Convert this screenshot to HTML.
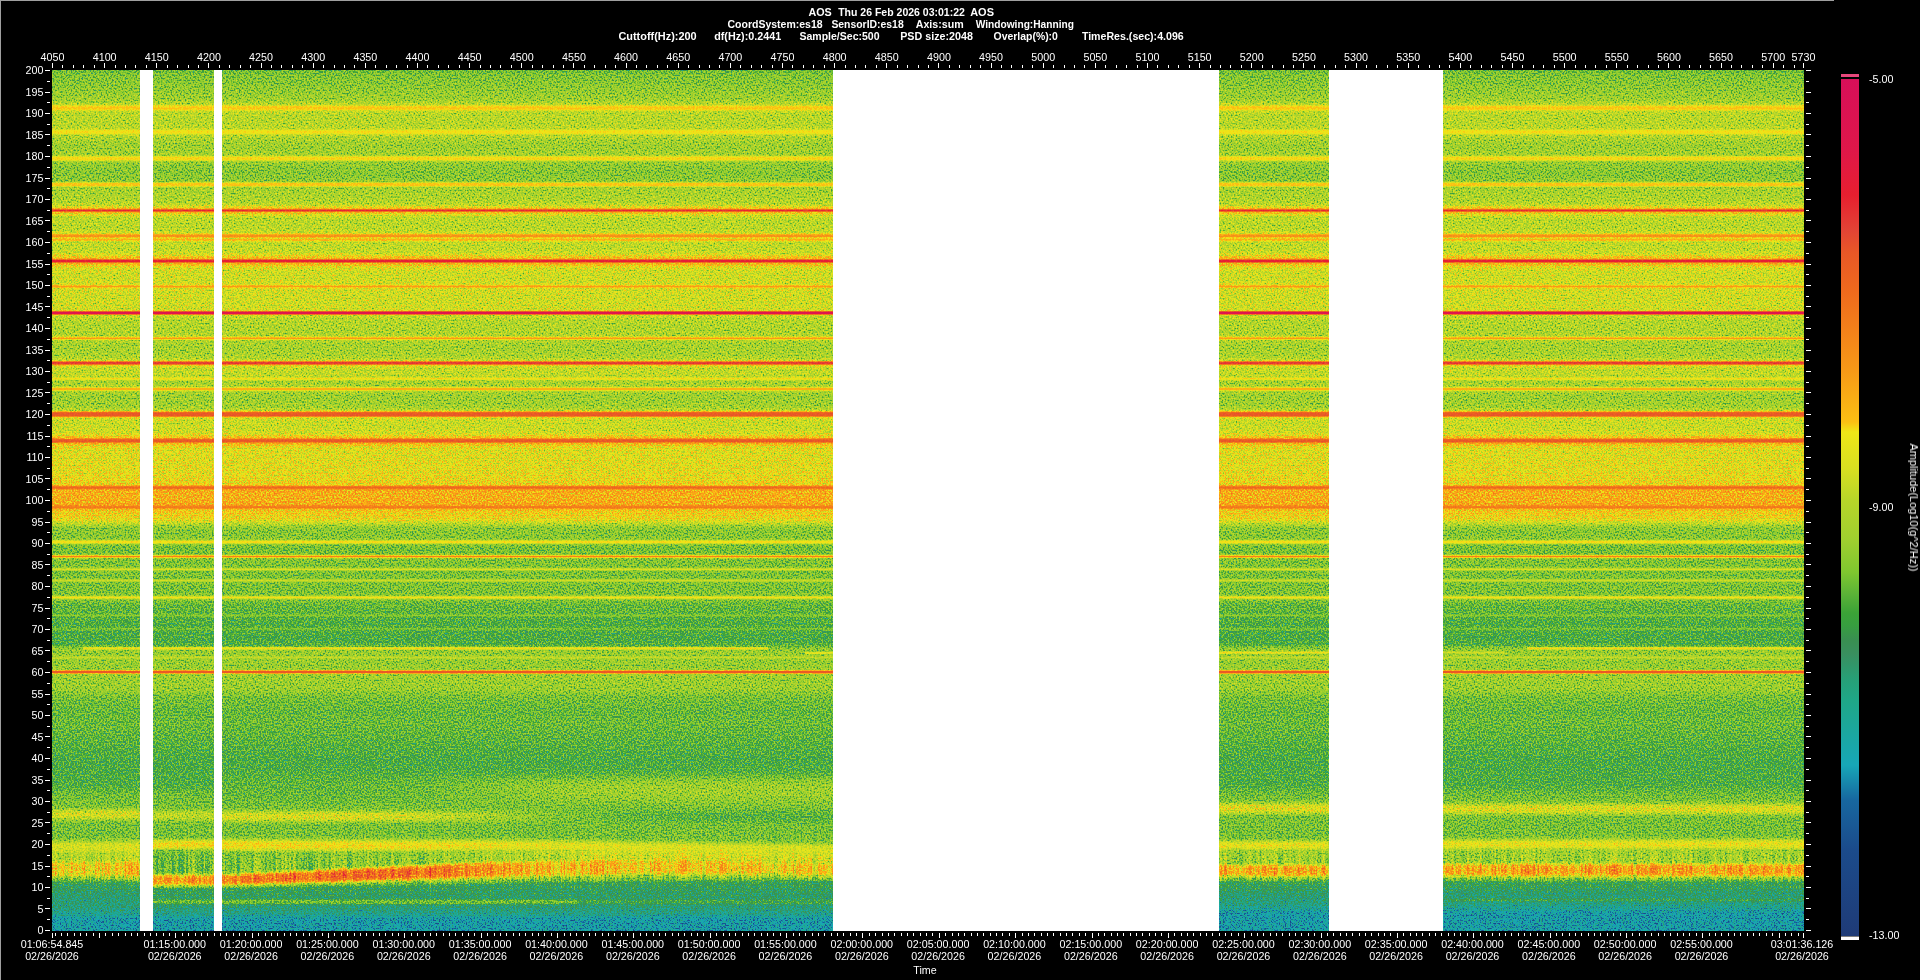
<!DOCTYPE html>
<html lang="en"><head><meta charset="utf-8"><title>AOS spectrogram</title>
<style>
html,body{margin:0;padding:0;background:#000;overflow:hidden}
svg{display:block}
.t{font:11px "Liberation Sans",sans-serif;fill:#fff}
.h{font:bold 11px "Liberation Sans",sans-serif;fill:#fff}
text{white-space:pre}
</style></head><body>
<svg width="1920" height="980" viewBox="0 0 1920 980">
<defs>
<linearGradient id="gb" x1="0" y1="0" x2="0" y2="1"><stop offset="0.0000" stop-color="#41ff00"/><stop offset="0.0058" stop-color="#46ff00"/><stop offset="0.0174" stop-color="#49ff00"/><stop offset="0.0348" stop-color="#50ff00"/><stop offset="0.0372" stop-color="#54ff00"/><stop offset="0.0407" stop-color="#5cff00"/><stop offset="0.0418" stop-color="#8c3e00"/><stop offset="0.0430" stop-color="#932600"/><stop offset="0.0453" stop-color="#932600"/><stop offset="0.0465" stop-color="#8c3e00"/><stop offset="0.0476" stop-color="#5cff00"/><stop offset="0.0499" stop-color="#59ff00"/><stop offset="0.0650" stop-color="#58ff00"/><stop offset="0.0685" stop-color="#5bff00"/><stop offset="0.0697" stop-color="#7d6e00"/><stop offset="0.0708" stop-color="#902600"/><stop offset="0.0732" stop-color="#902600"/><stop offset="0.0743" stop-color="#7d6e00"/><stop offset="0.0755" stop-color="#59ff00"/><stop offset="0.0790" stop-color="#55ff00"/><stop offset="0.0871" stop-color="#4fff00"/><stop offset="0.0987" stop-color="#51ff00"/><stop offset="0.0999" stop-color="#65b700"/><stop offset="0.1010" stop-color="#912600"/><stop offset="0.1045" stop-color="#912600"/><stop offset="0.1057" stop-color="#63b700"/><stop offset="0.1069" stop-color="#4eff00"/><stop offset="0.1103" stop-color="#4bff00"/><stop offset="0.1185" stop-color="#48ff00"/><stop offset="0.1278" stop-color="#4aff00"/><stop offset="0.1301" stop-color="#4eff00"/><stop offset="0.1312" stop-color="#932600"/><stop offset="0.1347" stop-color="#932600"/><stop offset="0.1359" stop-color="#53ff00"/><stop offset="0.1382" stop-color="#52ff00"/><stop offset="0.1533" stop-color="#56ff00"/><stop offset="0.1556" stop-color="#5aff00"/><stop offset="0.1568" stop-color="#5dff00"/><stop offset="0.1603" stop-color="#6fff00"/><stop offset="0.1614" stop-color="#8bb000"/><stop offset="0.1626" stop-color="#cd4c00"/><stop offset="0.1638" stop-color="#cd4c00"/><stop offset="0.1649" stop-color="#8bb000"/><stop offset="0.1661" stop-color="#70ff00"/><stop offset="0.1696" stop-color="#5fff00"/><stop offset="0.1719" stop-color="#5aff00"/><stop offset="0.1754" stop-color="#59ff00"/><stop offset="0.1835" stop-color="#59ff00"/><stop offset="0.1870" stop-color="#5cff00"/><stop offset="0.1893" stop-color="#61ff00"/><stop offset="0.1905" stop-color="#79b000"/><stop offset="0.1916" stop-color="#a04c00"/><stop offset="0.1940" stop-color="#a04c00"/><stop offset="0.1951" stop-color="#63ff00"/><stop offset="0.1963" stop-color="#858800"/><stop offset="0.1974" stop-color="#974c00"/><stop offset="0.1986" stop-color="#77b000"/><stop offset="0.1998" stop-color="#5cff00"/><stop offset="0.2033" stop-color="#5bff00"/><stop offset="0.2091" stop-color="#5cff00"/><stop offset="0.2114" stop-color="#5eff00"/><stop offset="0.2137" stop-color="#62ff00"/><stop offset="0.2160" stop-color="#6bff00"/><stop offset="0.2184" stop-color="#77ff00"/><stop offset="0.2195" stop-color="#7cd700"/><stop offset="0.2207" stop-color="#d24c00"/><stop offset="0.2230" stop-color="#d24c00"/><stop offset="0.2242" stop-color="#7cd700"/><stop offset="0.2253" stop-color="#78ff00"/><stop offset="0.2276" stop-color="#6cff00"/><stop offset="0.2300" stop-color="#64ff00"/><stop offset="0.2323" stop-color="#61ff00"/><stop offset="0.2358" stop-color="#60ff00"/><stop offset="0.2451" stop-color="#60ff00"/><stop offset="0.2485" stop-color="#62ff00"/><stop offset="0.2497" stop-color="#6ed200"/><stop offset="0.2509" stop-color="#a03300"/><stop offset="0.2520" stop-color="#a03300"/><stop offset="0.2532" stop-color="#6ed200"/><stop offset="0.2544" stop-color="#62ff00"/><stop offset="0.2590" stop-color="#60ff00"/><stop offset="0.2776" stop-color="#60ff00"/><stop offset="0.2787" stop-color="#61ff00"/><stop offset="0.2799" stop-color="#7ecc00"/><stop offset="0.2811" stop-color="#ee1a00"/><stop offset="0.2822" stop-color="#ee1a00"/><stop offset="0.2834" stop-color="#de3300"/><stop offset="0.2846" stop-color="#60ff00"/><stop offset="0.2869" stop-color="#5bff00"/><stop offset="0.2904" stop-color="#57ff00"/><stop offset="0.3055" stop-color="#55ff00"/><stop offset="0.3089" stop-color="#57ff00"/><stop offset="0.3101" stop-color="#779f00"/><stop offset="0.3113" stop-color="#a22600"/><stop offset="0.3124" stop-color="#a22600"/><stop offset="0.3136" stop-color="#57ff00"/><stop offset="0.3159" stop-color="#54ff00"/><stop offset="0.3194" stop-color="#52ff00"/><stop offset="0.3310" stop-color="#53ff00"/><stop offset="0.3345" stop-color="#56ff00"/><stop offset="0.3357" stop-color="#5aff00"/><stop offset="0.3380" stop-color="#66ff00"/><stop offset="0.3391" stop-color="#c84c00"/><stop offset="0.3415" stop-color="#c84c00"/><stop offset="0.3426" stop-color="#7dc400"/><stop offset="0.3438" stop-color="#66ff00"/><stop offset="0.3461" stop-color="#5dff00"/><stop offset="0.3473" stop-color="#5cff00"/><stop offset="0.3542" stop-color="#5bff00"/><stop offset="0.3566" stop-color="#58ff00"/><stop offset="0.3577" stop-color="#8e3300"/><stop offset="0.3589" stop-color="#8e3300"/><stop offset="0.3600" stop-color="#748e00"/><stop offset="0.3612" stop-color="#52ff00"/><stop offset="0.3647" stop-color="#53ff00"/><stop offset="0.3682" stop-color="#57ff00"/><stop offset="0.3693" stop-color="#992600"/><stop offset="0.3717" stop-color="#992600"/><stop offset="0.3728" stop-color="#61cf00"/><stop offset="0.3740" stop-color="#53ff00"/><stop offset="0.3775" stop-color="#4fff00"/><stop offset="0.3879" stop-color="#50ff00"/><stop offset="0.3914" stop-color="#51ff00"/><stop offset="0.3937" stop-color="#56ff00"/><stop offset="0.3961" stop-color="#5eff00"/><stop offset="0.3972" stop-color="#a86a00"/><stop offset="0.3984" stop-color="#c04000"/><stop offset="0.4019" stop-color="#c04000"/><stop offset="0.4030" stop-color="#7cbf00"/><stop offset="0.4042" stop-color="#63ff00"/><stop offset="0.4065" stop-color="#5fff00"/><stop offset="0.4100" stop-color="#5eff00"/><stop offset="0.4181" stop-color="#5fff00"/><stop offset="0.4216" stop-color="#62ff00"/><stop offset="0.4239" stop-color="#68ff00"/><stop offset="0.4274" stop-color="#76ff00"/><stop offset="0.4286" stop-color="#a97400"/><stop offset="0.4297" stop-color="#be4c00"/><stop offset="0.4321" stop-color="#be4c00"/><stop offset="0.4332" stop-color="#79ff00"/><stop offset="0.4379" stop-color="#69ff00"/><stop offset="0.4413" stop-color="#65ff00"/><stop offset="0.4646" stop-color="#67ff00"/><stop offset="0.4785" stop-color="#6bff00"/><stop offset="0.4820" stop-color="#6dff00"/><stop offset="0.4832" stop-color="#979500"/><stop offset="0.4843" stop-color="#b84000"/><stop offset="0.4855" stop-color="#b84000"/><stop offset="0.4866" stop-color="#9c9500"/><stop offset="0.4878" stop-color="#7bff00"/><stop offset="0.4901" stop-color="#7aff00"/><stop offset="0.5006" stop-color="#7aff00"/><stop offset="0.5052" stop-color="#7dff00"/><stop offset="0.5064" stop-color="#a26a00"/><stop offset="0.5075" stop-color="#ae4000"/><stop offset="0.5087" stop-color="#ae4000"/><stop offset="0.5099" stop-color="#76ff00"/><stop offset="0.5110" stop-color="#72ff00"/><stop offset="0.5122" stop-color="#70ff00"/><stop offset="0.5215" stop-color="#6bff00"/><stop offset="0.5261" stop-color="#5dff00"/><stop offset="0.5308" stop-color="#4dff00"/><stop offset="0.5343" stop-color="#49ff00"/><stop offset="0.5412" stop-color="#48ff00"/><stop offset="0.5447" stop-color="#4aff00"/><stop offset="0.5459" stop-color="#58cf00"/><stop offset="0.5470" stop-color="#902600"/><stop offset="0.5494" stop-color="#902600"/><stop offset="0.5505" stop-color="#56cf00"/><stop offset="0.5517" stop-color="#47ff00"/><stop offset="0.5540" stop-color="#44ff00"/><stop offset="0.5610" stop-color="#44ff00"/><stop offset="0.5621" stop-color="#46ff00"/><stop offset="0.5633" stop-color="#5bcf00"/><stop offset="0.5645" stop-color="#ad2600"/><stop offset="0.5656" stop-color="#ad2600"/><stop offset="0.5668" stop-color="#5ccf00"/><stop offset="0.5679" stop-color="#47ff00"/><stop offset="0.5772" stop-color="#45ff00"/><stop offset="0.5784" stop-color="#5fb000"/><stop offset="0.5796" stop-color="#7f4c00"/><stop offset="0.5807" stop-color="#7f4c00"/><stop offset="0.5819" stop-color="#45ff00"/><stop offset="0.5900" stop-color="#45ff00"/><stop offset="0.5912" stop-color="#51d700"/><stop offset="0.5923" stop-color="#7b4c00"/><stop offset="0.5935" stop-color="#7b4c00"/><stop offset="0.5947" stop-color="#51d700"/><stop offset="0.5958" stop-color="#45ff00"/><stop offset="0.6063" stop-color="#45ff00"/><stop offset="0.6098" stop-color="#47ff00"/><stop offset="0.6109" stop-color="#5eb700"/><stop offset="0.6121" stop-color="#902600"/><stop offset="0.6132" stop-color="#902600"/><stop offset="0.6144" stop-color="#5eb700"/><stop offset="0.6156" stop-color="#47ff00"/><stop offset="0.6202" stop-color="#40ff00"/><stop offset="0.6318" stop-color="#3dff00"/><stop offset="0.6330" stop-color="#5d8000"/><stop offset="0.6341" stop-color="#5d8000"/><stop offset="0.6353" stop-color="#3bff00"/><stop offset="0.6469" stop-color="#39ff00"/><stop offset="0.6481" stop-color="#4faa00"/><stop offset="0.6492" stop-color="#5a8000"/><stop offset="0.6504" stop-color="#48c600"/><stop offset="0.6516" stop-color="#39ff00"/><stop offset="0.6620" stop-color="#38ff00"/><stop offset="0.6678" stop-color="#3bff00"/><stop offset="0.6713" stop-color="#49ff00"/><stop offset="0.6748" stop-color="#4dff00"/><stop offset="0.6794" stop-color="#4dff00"/><stop offset="0.6806" stop-color="#51ee00"/><stop offset="0.6818" stop-color="#756600"/><stop offset="0.6829" stop-color="#756600"/><stop offset="0.6841" stop-color="#51ee00"/><stop offset="0.6852" stop-color="#4dff00"/><stop offset="0.6945" stop-color="#4dff00"/><stop offset="0.6969" stop-color="#50ff00"/><stop offset="0.6980" stop-color="#c51f00"/><stop offset="0.7003" stop-color="#c51f00"/><stop offset="0.7015" stop-color="#51ff00"/><stop offset="0.7050" stop-color="#4fff00"/><stop offset="0.7201" stop-color="#4eff00"/><stop offset="0.7282" stop-color="#44ff00"/><stop offset="0.7456" stop-color="#3fff00"/><stop offset="0.7573" stop-color="#41ff00"/><stop offset="0.8014" stop-color="#38ff00"/><stop offset="0.8304" stop-color="#38ff06"/><stop offset="0.8420" stop-color="#3fff12"/><stop offset="0.8571" stop-color="#41ff20"/><stop offset="1.0000" stop-color="#3eff4c"/></linearGradient>
<linearGradient id="l1" x1="0" y1="0" x2="0" y2="1"><stop offset="0.0000" stop-color="#3aff00"/><stop offset="0.0447" stop-color="#38ff00"/><stop offset="0.1844" stop-color="#38ff06"/><stop offset="0.2402" stop-color="#3eff17"/><stop offset="0.3017" stop-color="#3eff27"/><stop offset="0.3128" stop-color="#42ff2a"/><stop offset="0.3296" stop-color="#53ff2e"/><stop offset="0.3352" stop-color="#57ff2f"/><stop offset="0.3464" stop-color="#59ff32"/><stop offset="0.3575" stop-color="#58ff34"/><stop offset="0.3631" stop-color="#56ff36"/><stop offset="0.3687" stop-color="#51ff37"/><stop offset="0.3855" stop-color="#3fff3b"/><stop offset="0.3966" stop-color="#39ff3d"/><stop offset="0.4693" stop-color="#36fe50"/><stop offset="0.4804" stop-color="#39f753"/><stop offset="0.4860" stop-color="#3dee51"/><stop offset="0.4916" stop-color="#44e14d"/><stop offset="0.5084" stop-color="#5eb137"/><stop offset="0.5140" stop-color="#65a532"/><stop offset="0.5196" stop-color="#699e2e"/><stop offset="0.5251" stop-color="#6b9a2d"/><stop offset="0.5363" stop-color="#6b992f"/><stop offset="0.5475" stop-color="#689e35"/><stop offset="0.5531" stop-color="#63a53c"/><stop offset="0.5642" stop-color="#53c054"/><stop offset="0.5866" stop-color="#3ff793"/><stop offset="0.6034" stop-color="#38ffb7"/><stop offset="0.6145" stop-color="#42ffca"/><stop offset="0.6257" stop-color="#47ffde"/><stop offset="0.6480" stop-color="#44ffff"/><stop offset="0.6648" stop-color="#43ffff"/><stop offset="0.6760" stop-color="#41ffff"/><stop offset="0.6872" stop-color="#39ffff"/><stop offset="0.7039" stop-color="#23ffff"/><stop offset="0.7095" stop-color="#1dffff"/><stop offset="0.7151" stop-color="#19ffff"/><stop offset="0.7207" stop-color="#32ff4c"/><stop offset="0.7263" stop-color="#28ff4c"/><stop offset="0.7318" stop-color="#23ff4c"/><stop offset="0.7654" stop-color="#20ff4c"/><stop offset="0.7877" stop-color="#1aff4c"/><stop offset="0.8715" stop-color="#15ff4c"/><stop offset="0.9050" stop-color="#0dff4c"/><stop offset="0.9330" stop-color="#00ff4c"/><stop offset="1.0000" stop-color="#00ff4c"/></linearGradient>
<linearGradient id="l2" x1="0" y1="0" x2="0" y2="1"><stop offset="0.0000" stop-color="#3aff00"/><stop offset="0.0447" stop-color="#38ff00"/><stop offset="0.1844" stop-color="#38ff06"/><stop offset="0.2402" stop-color="#3eff17"/><stop offset="0.3073" stop-color="#3dff28"/><stop offset="0.3184" stop-color="#40ff2b"/><stop offset="0.3408" stop-color="#50ff30"/><stop offset="0.3520" stop-color="#51ff33"/><stop offset="0.3687" stop-color="#4fff37"/><stop offset="0.3911" stop-color="#3dff3c"/><stop offset="0.4022" stop-color="#39ff3f"/><stop offset="0.4693" stop-color="#36fe51"/><stop offset="0.4749" stop-color="#37fc52"/><stop offset="0.4804" stop-color="#3cf451"/><stop offset="0.4860" stop-color="#45e44c"/><stop offset="0.4972" stop-color="#63b737"/><stop offset="0.5028" stop-color="#6ea52f"/><stop offset="0.5084" stop-color="#749c2b"/><stop offset="0.5196" stop-color="#76992b"/><stop offset="0.5251" stop-color="#749c2e"/><stop offset="0.5307" stop-color="#6da536"/><stop offset="0.5363" stop-color="#61b743"/><stop offset="0.5475" stop-color="#40e468"/><stop offset="0.5531" stop-color="#35f476"/><stop offset="0.5587" stop-color="#2ffc7f"/><stop offset="0.5642" stop-color="#2cfe84"/><stop offset="0.5810" stop-color="#2aff91"/><stop offset="0.6425" stop-color="#17fffa"/><stop offset="0.6648" stop-color="#16ffff"/><stop offset="0.6704" stop-color="#17ffff"/><stop offset="0.6760" stop-color="#1bffff"/><stop offset="0.6816" stop-color="#26ffff"/><stop offset="0.6927" stop-color="#47ffff"/><stop offset="0.6983" stop-color="#51ffff"/><stop offset="0.7039" stop-color="#56ffff"/><stop offset="0.7207" stop-color="#57ffff"/><stop offset="0.7263" stop-color="#56ffff"/><stop offset="0.7318" stop-color="#51ffff"/><stop offset="0.7374" stop-color="#47ffff"/><stop offset="0.7486" stop-color="#26ffff"/><stop offset="0.7542" stop-color="#3bff4c"/><stop offset="0.7598" stop-color="#2dff4c"/><stop offset="0.7654" stop-color="#23ff4c"/><stop offset="0.8156" stop-color="#1fff4c"/><stop offset="0.8212" stop-color="#1fff4c"/><stop offset="0.8268" stop-color="#30ff4c"/><stop offset="0.8324" stop-color="#32ff4c"/><stop offset="0.8436" stop-color="#32ff4c"/><stop offset="0.8492" stop-color="#28ff4c"/><stop offset="0.8547" stop-color="#19ff4c"/><stop offset="0.8715" stop-color="#17ff4c"/><stop offset="0.9050" stop-color="#10ff4c"/><stop offset="0.9330" stop-color="#00ff4c"/><stop offset="1.0000" stop-color="#00ff4c"/></linearGradient>
<linearGradient id="s0" x1="0" y1="0" x2="0" y2="1"><stop offset="0.0000" stop-color="#3aff00"/><stop offset="0.0447" stop-color="#38ff00"/><stop offset="0.0950" stop-color="#39ff00"/><stop offset="0.1564" stop-color="#3dff00"/><stop offset="0.1899" stop-color="#3dff07"/><stop offset="0.2458" stop-color="#3bff18"/><stop offset="0.3128" stop-color="#3dff2a"/><stop offset="0.3240" stop-color="#41ff2c"/><stop offset="0.3408" stop-color="#52ff30"/><stop offset="0.3464" stop-color="#56ff32"/><stop offset="0.3575" stop-color="#58ff34"/><stop offset="0.3687" stop-color="#57ff37"/><stop offset="0.3743" stop-color="#55ff38"/><stop offset="0.3799" stop-color="#50ff39"/><stop offset="0.3966" stop-color="#3eff3d"/><stop offset="0.4078" stop-color="#39ff40"/><stop offset="0.4637" stop-color="#36fe4e"/><stop offset="0.4693" stop-color="#37fc4f"/><stop offset="0.4749" stop-color="#3bf650"/><stop offset="0.4804" stop-color="#41eb4d"/><stop offset="0.4860" stop-color="#4cda47"/><stop offset="0.4972" stop-color="#65b436"/><stop offset="0.5028" stop-color="#6ea52f"/><stop offset="0.5084" stop-color="#739d2b"/><stop offset="0.5196" stop-color="#76992b"/><stop offset="0.5307" stop-color="#739d30"/><stop offset="0.5363" stop-color="#6da537"/><stop offset="0.5419" stop-color="#63b342"/><stop offset="0.5587" stop-color="#3bea71"/><stop offset="0.5642" stop-color="#33f57d"/><stop offset="0.5698" stop-color="#2ffb85"/><stop offset="0.6425" stop-color="#19fffa"/><stop offset="0.6704" stop-color="#19ffff"/><stop offset="0.6760" stop-color="#1fffff"/><stop offset="0.6816" stop-color="#2effff"/><stop offset="0.6872" stop-color="#41ffff"/><stop offset="0.6927" stop-color="#51ffff"/><stop offset="0.6983" stop-color="#5affff"/><stop offset="0.7039" stop-color="#5effff"/><stop offset="0.7207" stop-color="#5effff"/><stop offset="0.7263" stop-color="#5cffff"/><stop offset="0.7318" stop-color="#56ffff"/><stop offset="0.7374" stop-color="#49ffff"/><stop offset="0.7486" stop-color="#24ffff"/><stop offset="0.7542" stop-color="#38ff4c"/><stop offset="0.7598" stop-color="#2cff4c"/><stop offset="0.7654" stop-color="#23ff4c"/><stop offset="0.8156" stop-color="#1eff4c"/><stop offset="0.8212" stop-color="#20ff4c"/><stop offset="0.8268" stop-color="#33ff4c"/><stop offset="0.8324" stop-color="#35ff4c"/><stop offset="0.8436" stop-color="#35ff4c"/><stop offset="0.8492" stop-color="#2aff4c"/><stop offset="0.8547" stop-color="#19ff4c"/><stop offset="0.8715" stop-color="#17ff4c"/><stop offset="0.9050" stop-color="#10ff4c"/><stop offset="0.9330" stop-color="#00ff4c"/><stop offset="1.0000" stop-color="#00ff4c"/></linearGradient>
<linearGradient id="s1" x1="0" y1="0" x2="0" y2="1"><stop offset="0.0000" stop-color="#3aff00"/><stop offset="0.0447" stop-color="#38ff00"/><stop offset="0.0950" stop-color="#39ff00"/><stop offset="0.1564" stop-color="#3dff00"/><stop offset="0.1899" stop-color="#3dff07"/><stop offset="0.2458" stop-color="#3bff18"/><stop offset="0.3128" stop-color="#3dff2a"/><stop offset="0.3240" stop-color="#41ff2c"/><stop offset="0.3408" stop-color="#53ff30"/><stop offset="0.3464" stop-color="#57ff32"/><stop offset="0.3575" stop-color="#59ff34"/><stop offset="0.3687" stop-color="#58ff37"/><stop offset="0.3743" stop-color="#55ff38"/><stop offset="0.3799" stop-color="#51ff39"/><stop offset="0.3966" stop-color="#3fff3d"/><stop offset="0.4078" stop-color="#39ff40"/><stop offset="0.4637" stop-color="#36fe4e"/><stop offset="0.4693" stop-color="#37fc50"/><stop offset="0.4749" stop-color="#3af750"/><stop offset="0.4804" stop-color="#40ec4d"/><stop offset="0.4860" stop-color="#4adc48"/><stop offset="0.4972" stop-color="#63b637"/><stop offset="0.5028" stop-color="#6da730"/><stop offset="0.5084" stop-color="#739e2c"/><stop offset="0.5140" stop-color="#759a2b"/><stop offset="0.5196" stop-color="#75992b"/><stop offset="0.5307" stop-color="#739c30"/><stop offset="0.5363" stop-color="#6ea336"/><stop offset="0.5419" stop-color="#64b141"/><stop offset="0.5587" stop-color="#3ce870"/><stop offset="0.5642" stop-color="#33f47c"/><stop offset="0.5698" stop-color="#30fb84"/><stop offset="0.6425" stop-color="#1afffa"/><stop offset="0.6648" stop-color="#19ffff"/><stop offset="0.6704" stop-color="#21ffff"/><stop offset="0.6760" stop-color="#31ffff"/><stop offset="0.6816" stop-color="#45ffff"/><stop offset="0.6872" stop-color="#55ffff"/><stop offset="0.6927" stop-color="#5effff"/><stop offset="0.6983" stop-color="#61ffff"/><stop offset="0.7151" stop-color="#62ffff"/><stop offset="0.7207" stop-color="#60ffff"/><stop offset="0.7263" stop-color="#5bffff"/><stop offset="0.7318" stop-color="#50ffff"/><stop offset="0.7430" stop-color="#2bffff"/><stop offset="0.7486" stop-color="#1dffff"/><stop offset="0.7542" stop-color="#32ff4c"/><stop offset="0.7598" stop-color="#27ff4c"/><stop offset="0.7654" stop-color="#23ff4c"/><stop offset="0.8156" stop-color="#1eff4c"/><stop offset="0.8212" stop-color="#1fff4c"/><stop offset="0.8268" stop-color="#33ff4c"/><stop offset="0.8324" stop-color="#35ff4c"/><stop offset="0.8436" stop-color="#35ff4c"/><stop offset="0.8492" stop-color="#29ff4c"/><stop offset="0.8547" stop-color="#19ff4c"/><stop offset="0.8715" stop-color="#17ff4c"/><stop offset="0.9050" stop-color="#10ff4c"/><stop offset="0.9330" stop-color="#00ff4c"/><stop offset="1.0000" stop-color="#00ff4c"/></linearGradient>
<linearGradient id="s2" x1="0" y1="0" x2="0" y2="1"><stop offset="0.0000" stop-color="#3aff00"/><stop offset="0.0447" stop-color="#38ff00"/><stop offset="0.0950" stop-color="#39ff00"/><stop offset="0.1564" stop-color="#3dff00"/><stop offset="0.1899" stop-color="#3dff07"/><stop offset="0.2458" stop-color="#3bff18"/><stop offset="0.3128" stop-color="#3dff2a"/><stop offset="0.3240" stop-color="#42ff2c"/><stop offset="0.3408" stop-color="#53ff30"/><stop offset="0.3464" stop-color="#57ff32"/><stop offset="0.3575" stop-color="#5aff34"/><stop offset="0.3687" stop-color="#59ff37"/><stop offset="0.3743" stop-color="#56ff38"/><stop offset="0.3799" stop-color="#52ff39"/><stop offset="0.3966" stop-color="#3fff3d"/><stop offset="0.4078" stop-color="#39ff40"/><stop offset="0.4637" stop-color="#36fe4e"/><stop offset="0.4749" stop-color="#39f750"/><stop offset="0.4804" stop-color="#3fee4e"/><stop offset="0.4860" stop-color="#49de49"/><stop offset="0.4972" stop-color="#62b838"/><stop offset="0.5028" stop-color="#6ca831"/><stop offset="0.5084" stop-color="#729e2c"/><stop offset="0.5140" stop-color="#759a2b"/><stop offset="0.5196" stop-color="#75992b"/><stop offset="0.5307" stop-color="#739b2f"/><stop offset="0.5363" stop-color="#6ea235"/><stop offset="0.5419" stop-color="#65af40"/><stop offset="0.5587" stop-color="#3ee66f"/><stop offset="0.5642" stop-color="#34f37b"/><stop offset="0.5698" stop-color="#31fa84"/><stop offset="0.6425" stop-color="#1bfffa"/><stop offset="0.6592" stop-color="#1affff"/><stop offset="0.6648" stop-color="#24ffff"/><stop offset="0.6704" stop-color="#35ffff"/><stop offset="0.6760" stop-color="#48ffff"/><stop offset="0.6816" stop-color="#58ffff"/><stop offset="0.6872" stop-color="#61ffff"/><stop offset="0.6927" stop-color="#64ffff"/><stop offset="0.7095" stop-color="#65ffff"/><stop offset="0.7151" stop-color="#64ffff"/><stop offset="0.7207" stop-color="#60ffff"/><stop offset="0.7263" stop-color="#56ffff"/><stop offset="0.7318" stop-color="#46ffff"/><stop offset="0.7374" stop-color="#32ffff"/><stop offset="0.7430" stop-color="#22ffff"/><stop offset="0.7486" stop-color="#39ff4c"/><stop offset="0.7542" stop-color="#2dff4c"/><stop offset="0.7598" stop-color="#23ff4c"/><stop offset="0.8156" stop-color="#1eff4c"/><stop offset="0.8212" stop-color="#1fff4c"/><stop offset="0.8268" stop-color="#33ff4c"/><stop offset="0.8324" stop-color="#35ff4c"/><stop offset="0.8436" stop-color="#35ff4c"/><stop offset="0.8492" stop-color="#29ff4c"/><stop offset="0.8547" stop-color="#19ff4c"/><stop offset="0.8715" stop-color="#17ff4c"/><stop offset="0.9050" stop-color="#10ff4c"/><stop offset="0.9330" stop-color="#00ff4c"/><stop offset="1.0000" stop-color="#00ff4c"/></linearGradient>
<linearGradient id="s3" x1="0" y1="0" x2="0" y2="1"><stop offset="0.0000" stop-color="#3aff00"/><stop offset="0.0447" stop-color="#38ff00"/><stop offset="0.0950" stop-color="#39ff00"/><stop offset="0.1564" stop-color="#3dff00"/><stop offset="0.1899" stop-color="#3dff07"/><stop offset="0.2458" stop-color="#3bff18"/><stop offset="0.3128" stop-color="#3dff2a"/><stop offset="0.3240" stop-color="#42ff2c"/><stop offset="0.3408" stop-color="#54ff30"/><stop offset="0.3464" stop-color="#58ff32"/><stop offset="0.3575" stop-color="#5aff34"/><stop offset="0.3687" stop-color="#59ff37"/><stop offset="0.3743" stop-color="#57ff38"/><stop offset="0.3799" stop-color="#52ff39"/><stop offset="0.3966" stop-color="#3fff3d"/><stop offset="0.4078" stop-color="#39ff40"/><stop offset="0.4693" stop-color="#37fd50"/><stop offset="0.4749" stop-color="#39f851"/><stop offset="0.4804" stop-color="#3eef4f"/><stop offset="0.4860" stop-color="#48e04a"/><stop offset="0.4972" stop-color="#60ba39"/><stop offset="0.5028" stop-color="#6aaa31"/><stop offset="0.5084" stop-color="#719f2d"/><stop offset="0.5140" stop-color="#749a2b"/><stop offset="0.5251" stop-color="#74992d"/><stop offset="0.5307" stop-color="#739b2f"/><stop offset="0.5363" stop-color="#6fa135"/><stop offset="0.5419" stop-color="#66ad3f"/><stop offset="0.5587" stop-color="#3fe56d"/><stop offset="0.5642" stop-color="#35f27a"/><stop offset="0.5698" stop-color="#31fa84"/><stop offset="0.6425" stop-color="#1bfffa"/><stop offset="0.6536" stop-color="#1bffff"/><stop offset="0.6592" stop-color="#26ffff"/><stop offset="0.6704" stop-color="#4cffff"/><stop offset="0.6760" stop-color="#5bffff"/><stop offset="0.6816" stop-color="#64ffff"/><stop offset="0.6872" stop-color="#68ffff"/><stop offset="0.7039" stop-color="#68ffff"/><stop offset="0.7095" stop-color="#68ffff"/><stop offset="0.7151" stop-color="#64ffff"/><stop offset="0.7207" stop-color="#5cffff"/><stop offset="0.7263" stop-color="#4dffff"/><stop offset="0.7374" stop-color="#27ffff"/><stop offset="0.7430" stop-color="#1cffff"/><stop offset="0.7486" stop-color="#33ff4c"/><stop offset="0.7542" stop-color="#28ff4c"/><stop offset="0.7598" stop-color="#23ff4c"/><stop offset="0.8156" stop-color="#1dff4c"/><stop offset="0.8212" stop-color="#1eff4c"/><stop offset="0.8268" stop-color="#33ff4c"/><stop offset="0.8324" stop-color="#35ff4c"/><stop offset="0.8436" stop-color="#35ff4c"/><stop offset="0.8492" stop-color="#29ff4c"/><stop offset="0.8547" stop-color="#19ff4c"/><stop offset="0.8715" stop-color="#17ff4c"/><stop offset="0.9050" stop-color="#10ff4c"/><stop offset="0.9330" stop-color="#00ff4c"/><stop offset="1.0000" stop-color="#00ff4c"/></linearGradient>
<linearGradient id="s4" x1="0" y1="0" x2="0" y2="1"><stop offset="0.0000" stop-color="#3aff00"/><stop offset="0.0447" stop-color="#38ff00"/><stop offset="0.0950" stop-color="#39ff00"/><stop offset="0.1564" stop-color="#3dff00"/><stop offset="0.1899" stop-color="#3dff07"/><stop offset="0.2458" stop-color="#3bff18"/><stop offset="0.3128" stop-color="#3dff2a"/><stop offset="0.3240" stop-color="#42ff2c"/><stop offset="0.3408" stop-color="#55ff30"/><stop offset="0.3464" stop-color="#59ff32"/><stop offset="0.3575" stop-color="#5bff34"/><stop offset="0.3687" stop-color="#5aff37"/><stop offset="0.3743" stop-color="#58ff38"/><stop offset="0.3799" stop-color="#53ff39"/><stop offset="0.3966" stop-color="#3fff3d"/><stop offset="0.4078" stop-color="#39ff40"/><stop offset="0.4693" stop-color="#36fd50"/><stop offset="0.4749" stop-color="#38f951"/><stop offset="0.4804" stop-color="#3ef050"/><stop offset="0.4860" stop-color="#46e24b"/><stop offset="0.5028" stop-color="#69ab32"/><stop offset="0.5084" stop-color="#70a02d"/><stop offset="0.5140" stop-color="#749b2b"/><stop offset="0.5251" stop-color="#74992d"/><stop offset="0.5307" stop-color="#739b2f"/><stop offset="0.5363" stop-color="#6fa034"/><stop offset="0.5419" stop-color="#67ac3d"/><stop offset="0.5475" stop-color="#5bbc4b"/><stop offset="0.5587" stop-color="#40e36c"/><stop offset="0.5642" stop-color="#36f17a"/><stop offset="0.5698" stop-color="#32f983"/><stop offset="0.6425" stop-color="#1cfffa"/><stop offset="0.6480" stop-color="#1dffff"/><stop offset="0.6536" stop-color="#29ffff"/><stop offset="0.6648" stop-color="#4fffff"/><stop offset="0.6704" stop-color="#5effff"/><stop offset="0.6760" stop-color="#67ffff"/><stop offset="0.6816" stop-color="#6bffff"/><stop offset="0.6983" stop-color="#6cffff"/><stop offset="0.7039" stop-color="#6bffff"/><stop offset="0.7095" stop-color="#69ffff"/><stop offset="0.7151" stop-color="#62ffff"/><stop offset="0.7207" stop-color="#55ffff"/><stop offset="0.7318" stop-color="#2effff"/><stop offset="0.7374" stop-color="#20ffff"/><stop offset="0.7430" stop-color="#18ffff"/><stop offset="0.7486" stop-color="#2eff4c"/><stop offset="0.7542" stop-color="#24ff4c"/><stop offset="0.8156" stop-color="#1dff4c"/><stop offset="0.8212" stop-color="#1eff4c"/><stop offset="0.8268" stop-color="#33ff4c"/><stop offset="0.8324" stop-color="#35ff4c"/><stop offset="0.8436" stop-color="#35ff4c"/><stop offset="0.8492" stop-color="#29ff4c"/><stop offset="0.8547" stop-color="#19ff4c"/><stop offset="0.8715" stop-color="#17ff4c"/><stop offset="0.9050" stop-color="#10ff4c"/><stop offset="0.9330" stop-color="#00ff4c"/><stop offset="1.0000" stop-color="#00ff4c"/></linearGradient>
<linearGradient id="s5" x1="0" y1="0" x2="0" y2="1"><stop offset="0.0000" stop-color="#3aff00"/><stop offset="0.0447" stop-color="#38ff00"/><stop offset="0.0950" stop-color="#39ff00"/><stop offset="0.1564" stop-color="#3dff00"/><stop offset="0.1899" stop-color="#3eff07"/><stop offset="0.2458" stop-color="#3bff18"/><stop offset="0.3128" stop-color="#3dff2a"/><stop offset="0.3240" stop-color="#42ff2c"/><stop offset="0.3408" stop-color="#54ff30"/><stop offset="0.3464" stop-color="#58ff32"/><stop offset="0.3575" stop-color="#5aff34"/><stop offset="0.3687" stop-color="#59ff37"/><stop offset="0.3743" stop-color="#57ff38"/><stop offset="0.3799" stop-color="#52ff39"/><stop offset="0.3966" stop-color="#3fff3d"/><stop offset="0.4078" stop-color="#39ff40"/><stop offset="0.4693" stop-color="#36fd50"/><stop offset="0.4749" stop-color="#38f951"/><stop offset="0.4804" stop-color="#3df150"/><stop offset="0.4860" stop-color="#46e24b"/><stop offset="0.5028" stop-color="#69ab32"/><stop offset="0.5084" stop-color="#70a02d"/><stop offset="0.5140" stop-color="#749b2b"/><stop offset="0.5251" stop-color="#74992d"/><stop offset="0.5307" stop-color="#739b2f"/><stop offset="0.5363" stop-color="#6fa034"/><stop offset="0.5419" stop-color="#67ab3d"/><stop offset="0.5475" stop-color="#5bbc4b"/><stop offset="0.5587" stop-color="#40e26c"/><stop offset="0.5642" stop-color="#36f179"/><stop offset="0.5810" stop-color="#2fff91"/><stop offset="0.6369" stop-color="#1efff1"/><stop offset="0.6425" stop-color="#20fffa"/><stop offset="0.6480" stop-color="#2dffff"/><stop offset="0.6592" stop-color="#52ffff"/><stop offset="0.6648" stop-color="#60ffff"/><stop offset="0.6704" stop-color="#68ffff"/><stop offset="0.6760" stop-color="#6bffff"/><stop offset="0.6927" stop-color="#6cffff"/><stop offset="0.7039" stop-color="#69ffff"/><stop offset="0.7095" stop-color="#64ffff"/><stop offset="0.7151" stop-color="#59ffff"/><stop offset="0.7207" stop-color="#48ffff"/><stop offset="0.7263" stop-color="#34ffff"/><stop offset="0.7318" stop-color="#24ffff"/><stop offset="0.7374" stop-color="#1bffff"/><stop offset="0.7430" stop-color="#34ff4c"/><stop offset="0.7486" stop-color="#2aff4c"/><stop offset="0.7542" stop-color="#23ff4c"/><stop offset="0.8156" stop-color="#1dff4c"/><stop offset="0.8212" stop-color="#1eff4c"/><stop offset="0.8268" stop-color="#33ff4c"/><stop offset="0.8324" stop-color="#35ff4c"/><stop offset="0.8436" stop-color="#35ff4c"/><stop offset="0.8492" stop-color="#29ff4c"/><stop offset="0.8547" stop-color="#19ff4c"/><stop offset="0.8715" stop-color="#17ff4c"/><stop offset="0.9050" stop-color="#10ff4c"/><stop offset="0.9330" stop-color="#00ff4c"/><stop offset="1.0000" stop-color="#00ff4c"/></linearGradient>
<linearGradient id="s6" x1="0" y1="0" x2="0" y2="1"><stop offset="0.0000" stop-color="#3aff00"/><stop offset="0.0447" stop-color="#38ff00"/><stop offset="0.0950" stop-color="#39ff00"/><stop offset="0.1564" stop-color="#3eff00"/><stop offset="0.1899" stop-color="#3eff07"/><stop offset="0.2458" stop-color="#3cff18"/><stop offset="0.3128" stop-color="#3dff2a"/><stop offset="0.3240" stop-color="#42ff2c"/><stop offset="0.3408" stop-color="#53ff30"/><stop offset="0.3464" stop-color="#57ff32"/><stop offset="0.3575" stop-color="#59ff34"/><stop offset="0.3687" stop-color="#58ff37"/><stop offset="0.3743" stop-color="#56ff38"/><stop offset="0.3799" stop-color="#51ff39"/><stop offset="0.3966" stop-color="#3fff3d"/><stop offset="0.4078" stop-color="#39ff40"/><stop offset="0.4693" stop-color="#36fd50"/><stop offset="0.4749" stop-color="#38f951"/><stop offset="0.4804" stop-color="#3df150"/><stop offset="0.4860" stop-color="#46e24b"/><stop offset="0.5028" stop-color="#69ab32"/><stop offset="0.5084" stop-color="#70a02d"/><stop offset="0.5140" stop-color="#739b2b"/><stop offset="0.5251" stop-color="#74992d"/><stop offset="0.5307" stop-color="#739b2f"/><stop offset="0.5363" stop-color="#6fa034"/><stop offset="0.5419" stop-color="#67ab3d"/><stop offset="0.5475" stop-color="#5bbc4b"/><stop offset="0.5587" stop-color="#40e26c"/><stop offset="0.5642" stop-color="#36f179"/><stop offset="0.5810" stop-color="#30ff91"/><stop offset="0.6313" stop-color="#20ffe7"/><stop offset="0.6369" stop-color="#24fff1"/><stop offset="0.6425" stop-color="#31fffa"/><stop offset="0.6536" stop-color="#53ffff"/><stop offset="0.6592" stop-color="#60ffff"/><stop offset="0.6648" stop-color="#67ffff"/><stop offset="0.6704" stop-color="#6affff"/><stop offset="0.6760" stop-color="#6bffff"/><stop offset="0.6927" stop-color="#6bffff"/><stop offset="0.6983" stop-color="#69ffff"/><stop offset="0.7039" stop-color="#65ffff"/><stop offset="0.7095" stop-color="#5bffff"/><stop offset="0.7151" stop-color="#4dffff"/><stop offset="0.7263" stop-color="#29ffff"/><stop offset="0.7318" stop-color="#1dffff"/><stop offset="0.7374" stop-color="#18ffff"/><stop offset="0.7430" stop-color="#30ff4c"/><stop offset="0.7486" stop-color="#26ff4c"/><stop offset="0.7542" stop-color="#23ff4c"/><stop offset="0.8156" stop-color="#1cff4c"/><stop offset="0.8212" stop-color="#1eff4c"/><stop offset="0.8268" stop-color="#33ff4c"/><stop offset="0.8324" stop-color="#35ff4c"/><stop offset="0.8436" stop-color="#35ff4c"/><stop offset="0.8492" stop-color="#29ff4c"/><stop offset="0.8547" stop-color="#19ff4c"/><stop offset="0.8715" stop-color="#17ff4c"/><stop offset="0.9050" stop-color="#10ff4c"/><stop offset="0.9330" stop-color="#00ff4c"/><stop offset="1.0000" stop-color="#00ff4c"/></linearGradient>
<linearGradient id="s7" x1="0" y1="0" x2="0" y2="1"><stop offset="0.0000" stop-color="#3aff00"/><stop offset="0.0447" stop-color="#38ff00"/><stop offset="0.1006" stop-color="#39ff00"/><stop offset="0.1788" stop-color="#3fff05"/><stop offset="0.2458" stop-color="#3cff18"/><stop offset="0.3128" stop-color="#3dff2a"/><stop offset="0.3240" stop-color="#41ff2c"/><stop offset="0.3408" stop-color="#52ff30"/><stop offset="0.3464" stop-color="#55ff32"/><stop offset="0.3575" stop-color="#58ff34"/><stop offset="0.3687" stop-color="#57ff37"/><stop offset="0.3743" stop-color="#54ff38"/><stop offset="0.3799" stop-color="#50ff39"/><stop offset="0.3966" stop-color="#3eff3d"/><stop offset="0.4078" stop-color="#39ff40"/><stop offset="0.4693" stop-color="#36fd50"/><stop offset="0.4749" stop-color="#38f951"/><stop offset="0.4804" stop-color="#3df150"/><stop offset="0.4860" stop-color="#46e24b"/><stop offset="0.5028" stop-color="#69ab32"/><stop offset="0.5084" stop-color="#70a02d"/><stop offset="0.5140" stop-color="#739b2b"/><stop offset="0.5251" stop-color="#74992d"/><stop offset="0.5307" stop-color="#739b2f"/><stop offset="0.5363" stop-color="#6fa034"/><stop offset="0.5419" stop-color="#67ab3d"/><stop offset="0.5475" stop-color="#5bbc4b"/><stop offset="0.5587" stop-color="#40e26c"/><stop offset="0.5642" stop-color="#37f179"/><stop offset="0.5810" stop-color="#31ff91"/><stop offset="0.6257" stop-color="#23ffde"/><stop offset="0.6313" stop-color="#29ffe7"/><stop offset="0.6369" stop-color="#36fff1"/><stop offset="0.6480" stop-color="#55ffff"/><stop offset="0.6536" stop-color="#60ffff"/><stop offset="0.6592" stop-color="#67ffff"/><stop offset="0.6704" stop-color="#6affff"/><stop offset="0.6872" stop-color="#6affff"/><stop offset="0.6927" stop-color="#69ffff"/><stop offset="0.6983" stop-color="#65ffff"/><stop offset="0.7039" stop-color="#5dffff"/><stop offset="0.7095" stop-color="#51ffff"/><stop offset="0.7207" stop-color="#2fffff"/><stop offset="0.7263" stop-color="#21ffff"/><stop offset="0.7318" stop-color="#1affff"/><stop offset="0.7374" stop-color="#36ff4c"/><stop offset="0.7486" stop-color="#23ff4c"/><stop offset="0.8156" stop-color="#1cff4c"/><stop offset="0.8212" stop-color="#1eff4c"/><stop offset="0.8268" stop-color="#33ff4c"/><stop offset="0.8324" stop-color="#35ff4c"/><stop offset="0.8436" stop-color="#35ff4c"/><stop offset="0.8492" stop-color="#29ff4c"/><stop offset="0.8547" stop-color="#19ff4c"/><stop offset="0.8715" stop-color="#17ff4c"/><stop offset="0.9050" stop-color="#10ff4c"/><stop offset="0.9330" stop-color="#00ff4c"/><stop offset="1.0000" stop-color="#00ff4c"/></linearGradient>
<linearGradient id="s8" x1="0" y1="0" x2="0" y2="1"><stop offset="0.0000" stop-color="#3aff00"/><stop offset="0.0447" stop-color="#38ff00"/><stop offset="0.1006" stop-color="#39ff00"/><stop offset="0.1788" stop-color="#40ff05"/><stop offset="0.2458" stop-color="#3dff18"/><stop offset="0.3128" stop-color="#3dff2a"/><stop offset="0.3240" stop-color="#41ff2c"/><stop offset="0.3408" stop-color="#50ff30"/><stop offset="0.3464" stop-color="#54ff32"/><stop offset="0.3575" stop-color="#56ff34"/><stop offset="0.3687" stop-color="#55ff37"/><stop offset="0.3743" stop-color="#53ff38"/><stop offset="0.3799" stop-color="#4fff39"/><stop offset="0.3966" stop-color="#3eff3d"/><stop offset="0.4078" stop-color="#39ff40"/><stop offset="0.4693" stop-color="#36fd50"/><stop offset="0.4749" stop-color="#38f951"/><stop offset="0.4804" stop-color="#3df150"/><stop offset="0.4860" stop-color="#46e24b"/><stop offset="0.5028" stop-color="#69ab32"/><stop offset="0.5084" stop-color="#70a02d"/><stop offset="0.5140" stop-color="#739b2b"/><stop offset="0.5251" stop-color="#74992d"/><stop offset="0.5307" stop-color="#729b2f"/><stop offset="0.5363" stop-color="#6ea034"/><stop offset="0.5419" stop-color="#67ab3d"/><stop offset="0.5475" stop-color="#5bbc4b"/><stop offset="0.5587" stop-color="#40e26c"/><stop offset="0.5642" stop-color="#38f179"/><stop offset="0.5754" stop-color="#33fd89"/><stop offset="0.6201" stop-color="#25ffd4"/><stop offset="0.6257" stop-color="#2dffde"/><stop offset="0.6425" stop-color="#57fffa"/><stop offset="0.6480" stop-color="#60ffff"/><stop offset="0.6536" stop-color="#66ffff"/><stop offset="0.6592" stop-color="#69ffff"/><stop offset="0.6816" stop-color="#69ffff"/><stop offset="0.6872" stop-color="#68ffff"/><stop offset="0.6927" stop-color="#65ffff"/><stop offset="0.6983" stop-color="#5fffff"/><stop offset="0.7039" stop-color="#54ffff"/><stop offset="0.7207" stop-color="#25ffff"/><stop offset="0.7263" stop-color="#1cffff"/><stop offset="0.7318" stop-color="#18ffff"/><stop offset="0.7374" stop-color="#31ff4c"/><stop offset="0.7430" stop-color="#28ff4c"/><stop offset="0.7486" stop-color="#23ff4c"/><stop offset="0.8156" stop-color="#1cff4c"/><stop offset="0.8212" stop-color="#1eff4c"/><stop offset="0.8268" stop-color="#33ff4c"/><stop offset="0.8324" stop-color="#35ff4c"/><stop offset="0.8436" stop-color="#35ff4c"/><stop offset="0.8492" stop-color="#29ff4c"/><stop offset="0.8547" stop-color="#19ff4c"/><stop offset="0.8715" stop-color="#17ff4c"/><stop offset="0.9050" stop-color="#10ff4c"/><stop offset="0.9330" stop-color="#00ff4c"/><stop offset="1.0000" stop-color="#00ff4c"/></linearGradient>
<linearGradient id="s9" x1="0" y1="0" x2="0" y2="1"><stop offset="0.0000" stop-color="#3aff00"/><stop offset="0.0447" stop-color="#38ff00"/><stop offset="0.1006" stop-color="#39ff00"/><stop offset="0.1620" stop-color="#41ff01"/><stop offset="0.1844" stop-color="#42ff06"/><stop offset="0.3128" stop-color="#3dff2a"/><stop offset="0.3240" stop-color="#40ff2c"/><stop offset="0.3464" stop-color="#50ff32"/><stop offset="0.3575" stop-color="#52ff34"/><stop offset="0.3743" stop-color="#4fff38"/><stop offset="0.3966" stop-color="#3dff3d"/><stop offset="0.4078" stop-color="#39ff40"/><stop offset="0.4693" stop-color="#36fd50"/><stop offset="0.4749" stop-color="#38f951"/><stop offset="0.4804" stop-color="#3df150"/><stop offset="0.4860" stop-color="#46e24b"/><stop offset="0.5028" stop-color="#68ab32"/><stop offset="0.5084" stop-color="#6fa02d"/><stop offset="0.5140" stop-color="#729b2b"/><stop offset="0.5251" stop-color="#73992d"/><stop offset="0.5307" stop-color="#729b2f"/><stop offset="0.5363" stop-color="#6ea034"/><stop offset="0.5419" stop-color="#66ab3d"/><stop offset="0.5475" stop-color="#5bbc4b"/><stop offset="0.5587" stop-color="#40e26c"/><stop offset="0.5642" stop-color="#3bf179"/><stop offset="0.5754" stop-color="#36fd89"/><stop offset="0.6145" stop-color="#2affca"/><stop offset="0.6201" stop-color="#34ffd4"/><stop offset="0.6313" stop-color="#4dffe7"/><stop offset="0.6369" stop-color="#58fff1"/><stop offset="0.6425" stop-color="#5efffa"/><stop offset="0.6536" stop-color="#64ffff"/><stop offset="0.6760" stop-color="#64ffff"/><stop offset="0.6872" stop-color="#61ffff"/><stop offset="0.6927" stop-color="#5cffff"/><stop offset="0.6983" stop-color="#53ffff"/><stop offset="0.7039" stop-color="#47ffff"/><stop offset="0.7151" stop-color="#2affff"/><stop offset="0.7207" stop-color="#1fffff"/><stop offset="0.7263" stop-color="#19ffff"/><stop offset="0.7318" stop-color="#35ff4c"/><stop offset="0.7430" stop-color="#23ff4c"/><stop offset="0.8156" stop-color="#1cff4c"/><stop offset="0.8212" stop-color="#1dff4c"/><stop offset="0.8268" stop-color="#33ff4c"/><stop offset="0.8324" stop-color="#35ff4c"/><stop offset="0.8436" stop-color="#35ff4c"/><stop offset="0.8492" stop-color="#29ff4c"/><stop offset="0.8547" stop-color="#19ff4c"/><stop offset="0.8715" stop-color="#17ff4c"/><stop offset="0.9050" stop-color="#10ff4c"/><stop offset="0.9330" stop-color="#00ff4c"/><stop offset="1.0000" stop-color="#00ff4c"/></linearGradient>
<linearGradient id="s10" x1="0" y1="0" x2="0" y2="1"><stop offset="0.0000" stop-color="#3aff00"/><stop offset="0.0447" stop-color="#38ff00"/><stop offset="0.1006" stop-color="#39ff00"/><stop offset="0.1229" stop-color="#3bff00"/><stop offset="0.1620" stop-color="#42ff01"/><stop offset="0.1899" stop-color="#44ff07"/><stop offset="0.3128" stop-color="#3dff2a"/><stop offset="0.3240" stop-color="#3fff2c"/><stop offset="0.3464" stop-color="#4dff32"/><stop offset="0.3575" stop-color="#4eff34"/><stop offset="0.3743" stop-color="#4bff38"/><stop offset="0.3966" stop-color="#3cff3d"/><stop offset="0.4078" stop-color="#39ff40"/><stop offset="0.4693" stop-color="#36fd50"/><stop offset="0.4749" stop-color="#38f951"/><stop offset="0.4804" stop-color="#3df150"/><stop offset="0.4860" stop-color="#46e24b"/><stop offset="0.5028" stop-color="#68ab32"/><stop offset="0.5084" stop-color="#6fa02d"/><stop offset="0.5140" stop-color="#729b2b"/><stop offset="0.5251" stop-color="#72992d"/><stop offset="0.5307" stop-color="#719b2f"/><stop offset="0.5363" stop-color="#6da034"/><stop offset="0.5419" stop-color="#66ab3d"/><stop offset="0.5475" stop-color="#5abc4b"/><stop offset="0.5531" stop-color="#4dd05b"/><stop offset="0.5587" stop-color="#43e26c"/><stop offset="0.5642" stop-color="#3ef179"/><stop offset="0.5754" stop-color="#39fd89"/><stop offset="0.6089" stop-color="#2fffc1"/><stop offset="0.6257" stop-color="#50ffde"/><stop offset="0.6313" stop-color="#58ffe7"/><stop offset="0.6369" stop-color="#5cfff1"/><stop offset="0.6536" stop-color="#5fffff"/><stop offset="0.6760" stop-color="#5fffff"/><stop offset="0.6816" stop-color="#5dffff"/><stop offset="0.6872" stop-color="#59ffff"/><stop offset="0.6927" stop-color="#52ffff"/><stop offset="0.6983" stop-color="#48ffff"/><stop offset="0.7095" stop-color="#2effff"/><stop offset="0.7151" stop-color="#23ffff"/><stop offset="0.7207" stop-color="#1bffff"/><stop offset="0.7263" stop-color="#18ffff"/><stop offset="0.7318" stop-color="#2fff4c"/><stop offset="0.7374" stop-color="#26ff4c"/><stop offset="0.7430" stop-color="#23ff4c"/><stop offset="0.8156" stop-color="#1cff4c"/><stop offset="0.8212" stop-color="#1dff4c"/><stop offset="0.8268" stop-color="#32ff4c"/><stop offset="0.8324" stop-color="#35ff4c"/><stop offset="0.8436" stop-color="#35ff4c"/><stop offset="0.8492" stop-color="#29ff4c"/><stop offset="0.8547" stop-color="#19ff4c"/><stop offset="0.8715" stop-color="#17ff4c"/><stop offset="0.9050" stop-color="#10ff4c"/><stop offset="0.9330" stop-color="#00ff4c"/><stop offset="1.0000" stop-color="#00ff4c"/></linearGradient>
<linearGradient id="s11" x1="0" y1="0" x2="0" y2="1"><stop offset="0.0000" stop-color="#3aff00"/><stop offset="0.0447" stop-color="#38ff00"/><stop offset="0.1006" stop-color="#39ff00"/><stop offset="0.1229" stop-color="#3cff00"/><stop offset="0.1620" stop-color="#44ff01"/><stop offset="0.1899" stop-color="#46ff07"/><stop offset="0.2123" stop-color="#45ff0c"/><stop offset="0.3128" stop-color="#3dff2a"/><stop offset="0.3240" stop-color="#3fff2c"/><stop offset="0.3464" stop-color="#49ff32"/><stop offset="0.3575" stop-color="#49ff34"/><stop offset="0.3743" stop-color="#47ff38"/><stop offset="0.3966" stop-color="#3cff3d"/><stop offset="0.4078" stop-color="#39ff40"/><stop offset="0.4693" stop-color="#36fd50"/><stop offset="0.4749" stop-color="#38fa51"/><stop offset="0.4804" stop-color="#3cf250"/><stop offset="0.4860" stop-color="#44e44c"/><stop offset="0.5028" stop-color="#66ad33"/><stop offset="0.5084" stop-color="#6da12e"/><stop offset="0.5140" stop-color="#719b2b"/><stop offset="0.5251" stop-color="#72992d"/><stop offset="0.5307" stop-color="#719a2f"/><stop offset="0.5363" stop-color="#6d9f33"/><stop offset="0.5419" stop-color="#66aa3c"/><stop offset="0.5475" stop-color="#5bba4a"/><stop offset="0.5531" stop-color="#4dce5a"/><stop offset="0.5587" stop-color="#46e16b"/><stop offset="0.5642" stop-color="#41f079"/><stop offset="0.5754" stop-color="#3cfd89"/><stop offset="0.6034" stop-color="#33ffb7"/><stop offset="0.6089" stop-color="#39ffc1"/><stop offset="0.6201" stop-color="#4dffd4"/><stop offset="0.6257" stop-color="#54ffde"/><stop offset="0.6313" stop-color="#59ffe7"/><stop offset="0.6369" stop-color="#5afff1"/><stop offset="0.6480" stop-color="#5affff"/><stop offset="0.6704" stop-color="#59ffff"/><stop offset="0.6816" stop-color="#56ffff"/><stop offset="0.6872" stop-color="#50ffff"/><stop offset="0.6927" stop-color="#48ffff"/><stop offset="0.7095" stop-color="#27ffff"/><stop offset="0.7151" stop-color="#1effff"/><stop offset="0.7207" stop-color="#19ffff"/><stop offset="0.7263" stop-color="#35ff4c"/><stop offset="0.7374" stop-color="#23ff4c"/><stop offset="0.8156" stop-color="#1bff4c"/><stop offset="0.8212" stop-color="#1dff4c"/><stop offset="0.8268" stop-color="#32ff4c"/><stop offset="0.8324" stop-color="#35ff4c"/><stop offset="0.8436" stop-color="#35ff4c"/><stop offset="0.8492" stop-color="#29ff4c"/><stop offset="0.8547" stop-color="#19ff4c"/><stop offset="0.8715" stop-color="#17ff4c"/><stop offset="0.9050" stop-color="#10ff4c"/><stop offset="0.9330" stop-color="#00ff4c"/><stop offset="1.0000" stop-color="#00ff4c"/></linearGradient>
<linearGradient id="s12" x1="0" y1="0" x2="0" y2="1"><stop offset="0.0000" stop-color="#3aff00"/><stop offset="0.0447" stop-color="#38ff00"/><stop offset="0.1006" stop-color="#39ff00"/><stop offset="0.1229" stop-color="#3cff00"/><stop offset="0.1676" stop-color="#47ff02"/><stop offset="0.1955" stop-color="#48ff09"/><stop offset="0.2402" stop-color="#45ff17"/><stop offset="0.3128" stop-color="#3dff2a"/><stop offset="0.3240" stop-color="#3eff2c"/><stop offset="0.3464" stop-color="#44ff32"/><stop offset="0.3631" stop-color="#45ff36"/><stop offset="0.3743" stop-color="#43ff38"/><stop offset="0.3966" stop-color="#3bff3d"/><stop offset="0.4078" stop-color="#38ff40"/><stop offset="0.4693" stop-color="#36fe50"/><stop offset="0.4749" stop-color="#37fa52"/><stop offset="0.4804" stop-color="#3bf351"/><stop offset="0.4860" stop-color="#43e64d"/><stop offset="0.5028" stop-color="#64af34"/><stop offset="0.5084" stop-color="#6ca22e"/><stop offset="0.5140" stop-color="#709b2c"/><stop offset="0.5251" stop-color="#71992d"/><stop offset="0.5307" stop-color="#709a2e"/><stop offset="0.5363" stop-color="#6d9e33"/><stop offset="0.5419" stop-color="#66a83b"/><stop offset="0.5475" stop-color="#5cb848"/><stop offset="0.5531" stop-color="#4fcb58"/><stop offset="0.5642" stop-color="#44ee77"/><stop offset="0.5754" stop-color="#3efc89"/><stop offset="0.5978" stop-color="#37ffae"/><stop offset="0.6034" stop-color="#36ffb7"/><stop offset="0.6145" stop-color="#48ffca"/><stop offset="0.6201" stop-color="#4fffd4"/><stop offset="0.6257" stop-color="#54ffde"/><stop offset="0.6313" stop-color="#56ffe7"/><stop offset="0.6480" stop-color="#54ffff"/><stop offset="0.6648" stop-color="#54ffff"/><stop offset="0.6760" stop-color="#52ffff"/><stop offset="0.6816" stop-color="#4effff"/><stop offset="0.6872" stop-color="#48ffff"/><stop offset="0.6927" stop-color="#40ffff"/><stop offset="0.7095" stop-color="#21ffff"/><stop offset="0.7151" stop-color="#1bffff"/><stop offset="0.7207" stop-color="#18ffff"/><stop offset="0.7263" stop-color="#32ff4c"/><stop offset="0.7318" stop-color="#28ff4c"/><stop offset="0.7374" stop-color="#23ff4c"/><stop offset="0.8156" stop-color="#1bff4c"/><stop offset="0.8212" stop-color="#1dff4c"/><stop offset="0.8268" stop-color="#32ff4c"/><stop offset="0.8324" stop-color="#35ff4c"/><stop offset="0.8436" stop-color="#35ff4c"/><stop offset="0.8492" stop-color="#29ff4c"/><stop offset="0.8547" stop-color="#19ff4c"/><stop offset="0.8715" stop-color="#17ff4c"/><stop offset="0.9050" stop-color="#10ff4c"/><stop offset="0.9330" stop-color="#00ff4c"/><stop offset="1.0000" stop-color="#00ff4c"/></linearGradient>
<linearGradient id="s13" x1="0" y1="0" x2="0" y2="1"><stop offset="0.0000" stop-color="#3aff00"/><stop offset="0.0447" stop-color="#38ff00"/><stop offset="0.1061" stop-color="#3aff00"/><stop offset="0.1285" stop-color="#3eff00"/><stop offset="0.1676" stop-color="#48ff02"/><stop offset="0.1955" stop-color="#4bff09"/><stop offset="0.2402" stop-color="#47ff17"/><stop offset="0.3128" stop-color="#3dff2a"/><stop offset="0.3464" stop-color="#40ff32"/><stop offset="0.3631" stop-color="#40ff36"/><stop offset="0.4078" stop-color="#38ff40"/><stop offset="0.4693" stop-color="#36fe50"/><stop offset="0.4749" stop-color="#37fb52"/><stop offset="0.4804" stop-color="#3af452"/><stop offset="0.4860" stop-color="#41e94e"/><stop offset="0.5028" stop-color="#62b136"/><stop offset="0.5084" stop-color="#6aa42f"/><stop offset="0.5140" stop-color="#6e9c2c"/><stop offset="0.5251" stop-color="#70992d"/><stop offset="0.5363" stop-color="#6d9d32"/><stop offset="0.5419" stop-color="#67a63a"/><stop offset="0.5531" stop-color="#52c856"/><stop offset="0.5642" stop-color="#47ec76"/><stop offset="0.5754" stop-color="#41fc88"/><stop offset="0.5978" stop-color="#3affae"/><stop offset="0.6034" stop-color="#3cffb7"/><stop offset="0.6145" stop-color="#4affca"/><stop offset="0.6201" stop-color="#4fffd4"/><stop offset="0.6257" stop-color="#51ffde"/><stop offset="0.6313" stop-color="#51ffe7"/><stop offset="0.6480" stop-color="#4effff"/><stop offset="0.6648" stop-color="#4effff"/><stop offset="0.6760" stop-color="#4bffff"/><stop offset="0.6816" stop-color="#46ffff"/><stop offset="0.6872" stop-color="#40ffff"/><stop offset="0.7039" stop-color="#25ffff"/><stop offset="0.7095" stop-color="#1effff"/><stop offset="0.7151" stop-color="#19ffff"/><stop offset="0.7207" stop-color="#17ffff"/><stop offset="0.7263" stop-color="#2fff4c"/><stop offset="0.7318" stop-color="#26ff4c"/><stop offset="0.7374" stop-color="#23ff4c"/><stop offset="0.8156" stop-color="#1bff4c"/><stop offset="0.8212" stop-color="#1dff4c"/><stop offset="0.8268" stop-color="#32ff4c"/><stop offset="0.8324" stop-color="#35ff4c"/><stop offset="0.8436" stop-color="#35ff4c"/><stop offset="0.8492" stop-color="#29ff4c"/><stop offset="0.8547" stop-color="#18ff4c"/><stop offset="0.8715" stop-color="#17ff4c"/><stop offset="0.9050" stop-color="#10ff4c"/><stop offset="0.9330" stop-color="#00ff4c"/><stop offset="1.0000" stop-color="#00ff4c"/></linearGradient>
<linearGradient id="s14" x1="0" y1="0" x2="0" y2="1"><stop offset="0.0000" stop-color="#3aff00"/><stop offset="0.0447" stop-color="#38ff00"/><stop offset="0.1061" stop-color="#3aff00"/><stop offset="0.1285" stop-color="#3eff00"/><stop offset="0.1676" stop-color="#4aff02"/><stop offset="0.1955" stop-color="#4cff09"/><stop offset="0.2402" stop-color="#49ff17"/><stop offset="0.3128" stop-color="#3dff2a"/><stop offset="0.3631" stop-color="#3cff36"/><stop offset="0.4078" stop-color="#38ff40"/><stop offset="0.4693" stop-color="#36fe51"/><stop offset="0.4804" stop-color="#39f653"/><stop offset="0.4860" stop-color="#3fec50"/><stop offset="0.4916" stop-color="#48dc4a"/><stop offset="0.5028" stop-color="#5fb538"/><stop offset="0.5084" stop-color="#68a631"/><stop offset="0.5140" stop-color="#6d9d2d"/><stop offset="0.5251" stop-color="#6f992d"/><stop offset="0.5363" stop-color="#6d9c31"/><stop offset="0.5419" stop-color="#68a438"/><stop offset="0.5531" stop-color="#56c452"/><stop offset="0.5642" stop-color="#4ae873"/><stop offset="0.5698" stop-color="#46f47f"/><stop offset="0.5978" stop-color="#3cffae"/><stop offset="0.6034" stop-color="#40ffb7"/><stop offset="0.6145" stop-color="#4affca"/><stop offset="0.6201" stop-color="#4dffd4"/><stop offset="0.6313" stop-color="#4dffe7"/><stop offset="0.6425" stop-color="#4bfffa"/><stop offset="0.6704" stop-color="#47ffff"/><stop offset="0.6816" stop-color="#40ffff"/><stop offset="0.6872" stop-color="#39ffff"/><stop offset="0.7039" stop-color="#20ffff"/><stop offset="0.7095" stop-color="#1bffff"/><stop offset="0.7151" stop-color="#18ffff"/><stop offset="0.7207" stop-color="#36ff4c"/><stop offset="0.7318" stop-color="#23ff4c"/><stop offset="0.8156" stop-color="#1bff4c"/><stop offset="0.8212" stop-color="#1dff4c"/><stop offset="0.8268" stop-color="#32ff4c"/><stop offset="0.8324" stop-color="#35ff4c"/><stop offset="0.8436" stop-color="#35ff4c"/><stop offset="0.8492" stop-color="#29ff4c"/><stop offset="0.8547" stop-color="#18ff4c"/><stop offset="0.8715" stop-color="#17ff4c"/><stop offset="0.9050" stop-color="#10ff4c"/><stop offset="0.9330" stop-color="#00ff4c"/><stop offset="1.0000" stop-color="#00ff4c"/></linearGradient>
<linearGradient id="s15" x1="0" y1="0" x2="0" y2="1"><stop offset="0.0000" stop-color="#3aff00"/><stop offset="0.0447" stop-color="#38ff00"/><stop offset="0.1061" stop-color="#3aff00"/><stop offset="0.1285" stop-color="#3eff00"/><stop offset="0.1676" stop-color="#4bff02"/><stop offset="0.1955" stop-color="#4dff09"/><stop offset="0.2402" stop-color="#4aff17"/><stop offset="0.3017" stop-color="#3eff27"/><stop offset="0.3352" stop-color="#3bff2f"/><stop offset="0.4749" stop-color="#36fd53"/><stop offset="0.4804" stop-color="#37fa54"/><stop offset="0.4860" stop-color="#3cf153"/><stop offset="0.4916" stop-color="#43e44e"/><stop offset="0.5084" stop-color="#63ac35"/><stop offset="0.5140" stop-color="#6aa12f"/><stop offset="0.5196" stop-color="#6e9b2d"/><stop offset="0.5307" stop-color="#6e992e"/><stop offset="0.5363" stop-color="#6d9a30"/><stop offset="0.5419" stop-color="#6aa035"/><stop offset="0.5531" stop-color="#5abb4c"/><stop offset="0.5698" stop-color="#49f07b"/><stop offset="0.5810" stop-color="#44fd8f"/><stop offset="0.5978" stop-color="#3effae"/><stop offset="0.6089" stop-color="#48ffc1"/><stop offset="0.6201" stop-color="#4dffd4"/><stop offset="0.6313" stop-color="#4cffe7"/><stop offset="0.6425" stop-color="#49fffa"/><stop offset="0.6592" stop-color="#48ffff"/><stop offset="0.6704" stop-color="#45ffff"/><stop offset="0.6816" stop-color="#3cffff"/><stop offset="0.6983" stop-color="#24ffff"/><stop offset="0.7039" stop-color="#1dffff"/><stop offset="0.7095" stop-color="#19ffff"/><stop offset="0.7151" stop-color="#17ffff"/><stop offset="0.7207" stop-color="#33ff4c"/><stop offset="0.7263" stop-color="#29ff4c"/><stop offset="0.7318" stop-color="#23ff4c"/><stop offset="0.8156" stop-color="#1bff4c"/><stop offset="0.8212" stop-color="#1cff4c"/><stop offset="0.8268" stop-color="#26ff4c"/><stop offset="0.8436" stop-color="#27ff4c"/><stop offset="0.8492" stop-color="#21ff4c"/><stop offset="0.8547" stop-color="#18ff4c"/><stop offset="0.8715" stop-color="#17ff4c"/><stop offset="0.9050" stop-color="#10ff4c"/><stop offset="0.9330" stop-color="#00ff4c"/><stop offset="1.0000" stop-color="#00ff4c"/></linearGradient>
<linearGradient id="s16" x1="0" y1="0" x2="0" y2="1"><stop offset="0.0000" stop-color="#3aff00"/><stop offset="0.0447" stop-color="#38ff00"/><stop offset="0.1061" stop-color="#3aff00"/><stop offset="0.1285" stop-color="#3fff00"/><stop offset="0.1676" stop-color="#4bff02"/><stop offset="0.1955" stop-color="#4eff09"/><stop offset="0.2458" stop-color="#4aff18"/><stop offset="0.2961" stop-color="#3fff26"/><stop offset="0.3464" stop-color="#37ff32"/><stop offset="0.3743" stop-color="#36ff38"/><stop offset="0.4078" stop-color="#38ff40"/><stop offset="0.4749" stop-color="#35fe54"/><stop offset="0.4804" stop-color="#36fc55"/><stop offset="0.4860" stop-color="#39f655"/><stop offset="0.4916" stop-color="#3feb52"/><stop offset="0.4972" stop-color="#48da4b"/><stop offset="0.5084" stop-color="#5fb439"/><stop offset="0.5140" stop-color="#67a532"/><stop offset="0.5196" stop-color="#6c9d2e"/><stop offset="0.5307" stop-color="#6e992e"/><stop offset="0.5419" stop-color="#6b9d33"/><stop offset="0.5475" stop-color="#66a53a"/><stop offset="0.5531" stop-color="#5eb346"/><stop offset="0.5642" stop-color="#52d967"/><stop offset="0.5754" stop-color="#49f583"/><stop offset="0.5978" stop-color="#40ffae"/><stop offset="0.6089" stop-color="#49ffc1"/><stop offset="0.6201" stop-color="#4dffd4"/><stop offset="0.6425" stop-color="#47fffa"/><stop offset="0.6592" stop-color="#46ffff"/><stop offset="0.6704" stop-color="#42ffff"/><stop offset="0.6816" stop-color="#37ffff"/><stop offset="0.6983" stop-color="#20ffff"/><stop offset="0.7039" stop-color="#1bffff"/><stop offset="0.7151" stop-color="#16ffff"/><stop offset="0.7207" stop-color="#30ff4c"/><stop offset="0.7263" stop-color="#26ff4c"/><stop offset="0.7318" stop-color="#23ff4c"/><stop offset="0.7933" stop-color="#1cff4c"/><stop offset="0.8212" stop-color="#1cff4c"/><stop offset="0.8268" stop-color="#26ff4c"/><stop offset="0.8436" stop-color="#27ff4c"/><stop offset="0.8492" stop-color="#21ff4c"/><stop offset="0.8547" stop-color="#18ff4c"/><stop offset="0.8715" stop-color="#17ff4c"/><stop offset="0.9050" stop-color="#10ff4c"/><stop offset="0.9330" stop-color="#00ff4c"/><stop offset="1.0000" stop-color="#00ff4c"/></linearGradient>
<linearGradient id="s17" x1="0" y1="0" x2="0" y2="1"><stop offset="0.0000" stop-color="#3aff00"/><stop offset="0.0447" stop-color="#38ff00"/><stop offset="0.1061" stop-color="#3aff00"/><stop offset="0.1285" stop-color="#3fff00"/><stop offset="0.1676" stop-color="#4cff02"/><stop offset="0.1955" stop-color="#4fff09"/><stop offset="0.2458" stop-color="#4aff18"/><stop offset="0.3520" stop-color="#34ff33"/><stop offset="0.3743" stop-color="#34ff38"/><stop offset="0.4078" stop-color="#38ff40"/><stop offset="0.4804" stop-color="#35fd56"/><stop offset="0.4860" stop-color="#37f957"/><stop offset="0.4916" stop-color="#3bf155"/><stop offset="0.4972" stop-color="#43e250"/><stop offset="0.5140" stop-color="#63ab36"/><stop offset="0.5196" stop-color="#6aa030"/><stop offset="0.5251" stop-color="#6d9b2e"/><stop offset="0.5363" stop-color="#6d992f"/><stop offset="0.5419" stop-color="#6c9b31"/><stop offset="0.5475" stop-color="#69a037"/><stop offset="0.5754" stop-color="#4cf17f"/><stop offset="0.5922" stop-color="#44ffa4"/><stop offset="0.5978" stop-color="#42ffae"/><stop offset="0.6089" stop-color="#4affc1"/><stop offset="0.6201" stop-color="#4cffd4"/><stop offset="0.6425" stop-color="#46fffa"/><stop offset="0.6648" stop-color="#42ffff"/><stop offset="0.6760" stop-color="#3affff"/><stop offset="0.6983" stop-color="#1dffff"/><stop offset="0.7095" stop-color="#17ffff"/><stop offset="0.7151" stop-color="#36ff4c"/><stop offset="0.7263" stop-color="#23ff4c"/><stop offset="0.8156" stop-color="#1bff4c"/><stop offset="0.8212" stop-color="#1cff4c"/><stop offset="0.8268" stop-color="#26ff4c"/><stop offset="0.8436" stop-color="#27ff4c"/><stop offset="0.8492" stop-color="#21ff4c"/><stop offset="0.8547" stop-color="#18ff4c"/><stop offset="0.8715" stop-color="#17ff4c"/><stop offset="0.9050" stop-color="#10ff4c"/><stop offset="0.9330" stop-color="#00ff4c"/><stop offset="1.0000" stop-color="#00ff4c"/></linearGradient>
<linearGradient id="s18" x1="0" y1="0" x2="0" y2="1"><stop offset="0.0000" stop-color="#3aff00"/><stop offset="0.0447" stop-color="#38ff00"/><stop offset="0.1061" stop-color="#3aff00"/><stop offset="0.1285" stop-color="#3fff00"/><stop offset="0.1676" stop-color="#4cff02"/><stop offset="0.1955" stop-color="#4fff09"/><stop offset="0.2458" stop-color="#4aff18"/><stop offset="0.3184" stop-color="#3cff2b"/><stop offset="0.3520" stop-color="#34ff33"/><stop offset="0.3743" stop-color="#33ff38"/><stop offset="0.4078" stop-color="#38ff40"/><stop offset="0.4804" stop-color="#35fe56"/><stop offset="0.4860" stop-color="#36fb58"/><stop offset="0.4916" stop-color="#3af457"/><stop offset="0.4972" stop-color="#40e753"/><stop offset="0.5140" stop-color="#60b038"/><stop offset="0.5196" stop-color="#68a332"/><stop offset="0.5251" stop-color="#6c9c2e"/><stop offset="0.5363" stop-color="#6d992f"/><stop offset="0.5419" stop-color="#6c9a31"/><stop offset="0.5475" stop-color="#6a9e35"/><stop offset="0.5587" stop-color="#5fb74b"/><stop offset="0.5754" stop-color="#4eed7c"/><stop offset="0.5866" stop-color="#46fc98"/><stop offset="0.5978" stop-color="#42ffae"/><stop offset="0.6089" stop-color="#48ffc1"/><stop offset="0.6201" stop-color="#4bffd4"/><stop offset="0.6425" stop-color="#45fffa"/><stop offset="0.6648" stop-color="#42ffff"/><stop offset="0.6760" stop-color="#39ffff"/><stop offset="0.6983" stop-color="#1dffff"/><stop offset="0.7095" stop-color="#17ffff"/><stop offset="0.7151" stop-color="#35ff4c"/><stop offset="0.7263" stop-color="#23ff4c"/><stop offset="0.8156" stop-color="#1bff4c"/><stop offset="0.8212" stop-color="#1bff4c"/><stop offset="0.8268" stop-color="#26ff4c"/><stop offset="0.8436" stop-color="#27ff4c"/><stop offset="0.8492" stop-color="#21ff4c"/><stop offset="0.8547" stop-color="#18ff4c"/><stop offset="0.8715" stop-color="#17ff4c"/><stop offset="0.9050" stop-color="#10ff4c"/><stop offset="0.9330" stop-color="#00ff4c"/><stop offset="1.0000" stop-color="#00ff4c"/></linearGradient>
<linearGradient id="s19" x1="0" y1="0" x2="0" y2="1"><stop offset="0.0000" stop-color="#3aff00"/><stop offset="0.0447" stop-color="#38ff00"/><stop offset="0.1061" stop-color="#3aff00"/><stop offset="0.1285" stop-color="#3fff00"/><stop offset="0.1676" stop-color="#4cff02"/><stop offset="0.1955" stop-color="#4fff09"/><stop offset="0.2235" stop-color="#4dff11"/><stop offset="0.2514" stop-color="#4aff1a"/><stop offset="0.3184" stop-color="#3cff2b"/><stop offset="0.3520" stop-color="#33ff33"/><stop offset="0.3743" stop-color="#32ff38"/><stop offset="0.4078" stop-color="#38ff40"/><stop offset="0.4804" stop-color="#35fe57"/><stop offset="0.4916" stop-color="#38f658"/><stop offset="0.4972" stop-color="#3eeb55"/><stop offset="0.5028" stop-color="#47db4e"/><stop offset="0.5140" stop-color="#5db53b"/><stop offset="0.5196" stop-color="#66a634"/><stop offset="0.5251" stop-color="#6b9d2f"/><stop offset="0.5363" stop-color="#6d992f"/><stop offset="0.5475" stop-color="#6a9c34"/><stop offset="0.5587" stop-color="#61b247"/><stop offset="0.5810" stop-color="#4bf588"/><stop offset="0.5978" stop-color="#43ffad"/><stop offset="0.6034" stop-color="#42ffb7"/><stop offset="0.6089" stop-color="#47ffc1"/><stop offset="0.6201" stop-color="#4affd4"/><stop offset="0.6425" stop-color="#44fffa"/><stop offset="0.6648" stop-color="#41ffff"/><stop offset="0.6760" stop-color="#39ffff"/><stop offset="0.6983" stop-color="#1dffff"/><stop offset="0.7095" stop-color="#17ffff"/><stop offset="0.7151" stop-color="#34ff4c"/><stop offset="0.7207" stop-color="#2aff4c"/><stop offset="0.7263" stop-color="#23ff4c"/><stop offset="0.8156" stop-color="#1bff4c"/><stop offset="0.8212" stop-color="#1bff4c"/><stop offset="0.8268" stop-color="#26ff4c"/><stop offset="0.8436" stop-color="#27ff4c"/><stop offset="0.8492" stop-color="#21ff4c"/><stop offset="0.8547" stop-color="#18ff4c"/><stop offset="0.8715" stop-color="#17ff4c"/><stop offset="0.9050" stop-color="#10ff4c"/><stop offset="0.9330" stop-color="#00ff4c"/><stop offset="1.0000" stop-color="#00ff4c"/></linearGradient>
<linearGradient id="s20" x1="0" y1="0" x2="0" y2="1"><stop offset="0.0000" stop-color="#3aff00"/><stop offset="0.0447" stop-color="#38ff00"/><stop offset="0.1061" stop-color="#3aff00"/><stop offset="0.1285" stop-color="#3fff00"/><stop offset="0.1676" stop-color="#4cff02"/><stop offset="0.1955" stop-color="#4fff09"/><stop offset="0.2235" stop-color="#4dff11"/><stop offset="0.2514" stop-color="#4aff1a"/><stop offset="0.3184" stop-color="#3cff2b"/><stop offset="0.3520" stop-color="#32ff33"/><stop offset="0.3743" stop-color="#32ff38"/><stop offset="0.3966" stop-color="#37ff3d"/><stop offset="0.4078" stop-color="#38ff40"/><stop offset="0.4860" stop-color="#35fd59"/><stop offset="0.4916" stop-color="#37f85a"/><stop offset="0.4972" stop-color="#3cef57"/><stop offset="0.5028" stop-color="#44e051"/><stop offset="0.5140" stop-color="#5aba3e"/><stop offset="0.5196" stop-color="#63aa36"/><stop offset="0.5251" stop-color="#699f31"/><stop offset="0.5307" stop-color="#6c9a2f"/><stop offset="0.5419" stop-color="#6c9930"/><stop offset="0.5475" stop-color="#6b9b33"/><stop offset="0.5587" stop-color="#63ad43"/><stop offset="0.5810" stop-color="#4cf286"/><stop offset="0.5866" stop-color="#48fa96"/><stop offset="0.5978" stop-color="#43ffad"/><stop offset="0.6034" stop-color="#41ffb7"/><stop offset="0.6145" stop-color="#48ffca"/><stop offset="0.6201" stop-color="#49ffd4"/><stop offset="0.6425" stop-color="#44fffa"/><stop offset="0.6648" stop-color="#41ffff"/><stop offset="0.6760" stop-color="#39ffff"/><stop offset="0.6983" stop-color="#1cffff"/><stop offset="0.7095" stop-color="#17ffff"/><stop offset="0.7151" stop-color="#32ff4c"/><stop offset="0.7207" stop-color="#29ff4c"/><stop offset="0.7263" stop-color="#23ff4c"/><stop offset="0.8156" stop-color="#1bff4c"/><stop offset="0.8212" stop-color="#1bff4c"/><stop offset="0.8268" stop-color="#26ff4c"/><stop offset="0.8436" stop-color="#27ff4c"/><stop offset="0.8492" stop-color="#21ff4c"/><stop offset="0.8547" stop-color="#18ff4c"/><stop offset="0.8715" stop-color="#17ff4c"/><stop offset="0.9050" stop-color="#10ff4c"/><stop offset="0.9330" stop-color="#00ff4c"/><stop offset="1.0000" stop-color="#00ff4c"/></linearGradient>
<linearGradient id="s21" x1="0" y1="0" x2="0" y2="1"><stop offset="0.0000" stop-color="#3aff00"/><stop offset="0.0447" stop-color="#38ff00"/><stop offset="0.1061" stop-color="#3aff00"/><stop offset="0.1285" stop-color="#3fff00"/><stop offset="0.1676" stop-color="#4cff02"/><stop offset="0.1955" stop-color="#4fff09"/><stop offset="0.2235" stop-color="#4dff11"/><stop offset="0.2514" stop-color="#49ff1a"/><stop offset="0.3184" stop-color="#3cff2b"/><stop offset="0.3520" stop-color="#32ff33"/><stop offset="0.3743" stop-color="#32ff38"/><stop offset="0.3966" stop-color="#37ff3d"/><stop offset="0.4078" stop-color="#38ff40"/><stop offset="0.4860" stop-color="#34fd59"/><stop offset="0.4916" stop-color="#36fa5a"/><stop offset="0.4972" stop-color="#3af259"/><stop offset="0.5028" stop-color="#41e454"/><stop offset="0.5196" stop-color="#61ad38"/><stop offset="0.5251" stop-color="#68a132"/><stop offset="0.5307" stop-color="#6b9b2f"/><stop offset="0.5419" stop-color="#6c9930"/><stop offset="0.5475" stop-color="#6b9a32"/><stop offset="0.5587" stop-color="#64aa41"/><stop offset="0.5810" stop-color="#4def83"/><stop offset="0.5866" stop-color="#48f894"/><stop offset="0.5978" stop-color="#43fead"/><stop offset="0.6089" stop-color="#41ffc1"/><stop offset="0.6145" stop-color="#45ffca"/><stop offset="0.6257" stop-color="#47ffde"/><stop offset="0.6480" stop-color="#42ffff"/><stop offset="0.6592" stop-color="#42ffff"/><stop offset="0.6704" stop-color="#3effff"/><stop offset="0.6816" stop-color="#33ffff"/><stop offset="0.6983" stop-color="#1dffff"/><stop offset="0.7039" stop-color="#19ffff"/><stop offset="0.7095" stop-color="#17ffff"/><stop offset="0.7151" stop-color="#32ff4c"/><stop offset="0.7207" stop-color="#28ff4c"/><stop offset="0.7263" stop-color="#23ff4c"/><stop offset="0.8156" stop-color="#1bff4c"/><stop offset="0.8212" stop-color="#1bff4c"/><stop offset="0.8268" stop-color="#26ff4c"/><stop offset="0.8436" stop-color="#27ff4c"/><stop offset="0.8492" stop-color="#21ff4c"/><stop offset="0.8547" stop-color="#18ff4c"/><stop offset="0.8715" stop-color="#17ff4c"/><stop offset="0.9050" stop-color="#10ff4c"/><stop offset="0.9330" stop-color="#00ff4c"/><stop offset="1.0000" stop-color="#00ff4c"/></linearGradient>
<linearGradient id="s22" x1="0" y1="0" x2="0" y2="1"><stop offset="0.0000" stop-color="#3aff00"/><stop offset="0.0447" stop-color="#38ff00"/><stop offset="0.1061" stop-color="#3aff00"/><stop offset="0.1285" stop-color="#3fff00"/><stop offset="0.1676" stop-color="#4cff02"/><stop offset="0.1955" stop-color="#4eff09"/><stop offset="0.2235" stop-color="#4dff11"/><stop offset="0.2514" stop-color="#49ff1a"/><stop offset="0.3184" stop-color="#3cff2b"/><stop offset="0.3520" stop-color="#32ff33"/><stop offset="0.3743" stop-color="#32ff38"/><stop offset="0.3966" stop-color="#37ff3d"/><stop offset="0.4078" stop-color="#38ff40"/><stop offset="0.4860" stop-color="#34fe5a"/><stop offset="0.4916" stop-color="#35fb5b"/><stop offset="0.4972" stop-color="#39f45a"/><stop offset="0.5028" stop-color="#3fe856"/><stop offset="0.5196" stop-color="#5fb03a"/><stop offset="0.5251" stop-color="#66a333"/><stop offset="0.5307" stop-color="#6a9c30"/><stop offset="0.5419" stop-color="#6c9930"/><stop offset="0.5531" stop-color="#689e36"/><stop offset="0.5642" stop-color="#60b64c"/><stop offset="0.5866" stop-color="#49f793"/><stop offset="0.6034" stop-color="#41ffb7"/><stop offset="0.6089" stop-color="#3fffc1"/><stop offset="0.6257" stop-color="#46ffde"/><stop offset="0.6480" stop-color="#42ffff"/><stop offset="0.6592" stop-color="#42ffff"/><stop offset="0.6704" stop-color="#3fffff"/><stop offset="0.6760" stop-color="#3bffff"/><stop offset="0.6816" stop-color="#36ffff"/><stop offset="0.6983" stop-color="#1fffff"/><stop offset="0.7039" stop-color="#1affff"/><stop offset="0.7095" stop-color="#17ffff"/><stop offset="0.7151" stop-color="#32ff4c"/><stop offset="0.7207" stop-color="#28ff4c"/><stop offset="0.7263" stop-color="#23ff4c"/><stop offset="0.8156" stop-color="#1bff4c"/><stop offset="0.8212" stop-color="#1bff4c"/><stop offset="0.8268" stop-color="#26ff4c"/><stop offset="0.8436" stop-color="#27ff4c"/><stop offset="0.8492" stop-color="#21ff4c"/><stop offset="0.8547" stop-color="#18ff4c"/><stop offset="0.8715" stop-color="#17ff4c"/><stop offset="0.9050" stop-color="#10ff4c"/><stop offset="0.9330" stop-color="#00ff4c"/><stop offset="1.0000" stop-color="#00ff4c"/></linearGradient>
<linearGradient id="s23" x1="0" y1="0" x2="0" y2="1"><stop offset="0.0000" stop-color="#3aff00"/><stop offset="0.0447" stop-color="#38ff00"/><stop offset="0.1061" stop-color="#3aff00"/><stop offset="0.1285" stop-color="#3fff00"/><stop offset="0.1676" stop-color="#4bff02"/><stop offset="0.1955" stop-color="#4eff09"/><stop offset="0.2235" stop-color="#4dff11"/><stop offset="0.2514" stop-color="#49ff1a"/><stop offset="0.3184" stop-color="#3cff2b"/><stop offset="0.3520" stop-color="#32ff33"/><stop offset="0.3743" stop-color="#32ff38"/><stop offset="0.3966" stop-color="#37ff3d"/><stop offset="0.4078" stop-color="#38ff40"/><stop offset="0.4860" stop-color="#34fe5a"/><stop offset="0.4972" stop-color="#38f65b"/><stop offset="0.5028" stop-color="#3deb57"/><stop offset="0.5084" stop-color="#47da50"/><stop offset="0.5196" stop-color="#5cb43d"/><stop offset="0.5251" stop-color="#64a635"/><stop offset="0.5307" stop-color="#699d30"/><stop offset="0.5419" stop-color="#6b9930"/><stop offset="0.5531" stop-color="#699c35"/><stop offset="0.5642" stop-color="#60b249"/><stop offset="0.5866" stop-color="#49f592"/><stop offset="0.6034" stop-color="#41ffb7"/><stop offset="0.6145" stop-color="#3dffca"/><stop offset="0.6257" stop-color="#44ffde"/><stop offset="0.6313" stop-color="#45ffe7"/><stop offset="0.6480" stop-color="#42ffff"/><stop offset="0.6704" stop-color="#40ffff"/><stop offset="0.6760" stop-color="#3dffff"/><stop offset="0.6816" stop-color="#38ffff"/><stop offset="0.6983" stop-color="#21ffff"/><stop offset="0.7039" stop-color="#1bffff"/><stop offset="0.7095" stop-color="#18ffff"/><stop offset="0.7151" stop-color="#32ff4c"/><stop offset="0.7207" stop-color="#28ff4c"/><stop offset="0.7263" stop-color="#23ff4c"/><stop offset="0.8156" stop-color="#1bff4c"/><stop offset="0.8212" stop-color="#1bff4c"/><stop offset="0.8268" stop-color="#26ff4c"/><stop offset="0.8436" stop-color="#27ff4c"/><stop offset="0.8492" stop-color="#21ff4c"/><stop offset="0.8547" stop-color="#18ff4c"/><stop offset="0.8715" stop-color="#17ff4c"/><stop offset="0.9050" stop-color="#10ff4c"/><stop offset="0.9330" stop-color="#00ff4c"/><stop offset="1.0000" stop-color="#00ff4c"/></linearGradient>
<linearGradient id="s24" x1="0" y1="0" x2="0" y2="1"><stop offset="0.0000" stop-color="#3aff00"/><stop offset="0.0447" stop-color="#38ff00"/><stop offset="0.1061" stop-color="#3aff00"/><stop offset="0.1285" stop-color="#3fff00"/><stop offset="0.1676" stop-color="#4bff02"/><stop offset="0.1955" stop-color="#4eff09"/><stop offset="0.2235" stop-color="#4cff11"/><stop offset="0.2514" stop-color="#49ff1a"/><stop offset="0.3184" stop-color="#3cff2b"/><stop offset="0.3520" stop-color="#33ff33"/><stop offset="0.3743" stop-color="#32ff38"/><stop offset="0.4078" stop-color="#38ff40"/><stop offset="0.4860" stop-color="#34fe5a"/><stop offset="0.4972" stop-color="#37f85c"/><stop offset="0.5028" stop-color="#3cee59"/><stop offset="0.5084" stop-color="#44de53"/><stop offset="0.5196" stop-color="#5ab83f"/><stop offset="0.5251" stop-color="#63a836"/><stop offset="0.5307" stop-color="#689e31"/><stop offset="0.5419" stop-color="#6b9930"/><stop offset="0.5531" stop-color="#699b34"/><stop offset="0.5642" stop-color="#61af46"/><stop offset="0.5866" stop-color="#49f390"/><stop offset="0.5922" stop-color="#45faa0"/><stop offset="0.6034" stop-color="#40ffb7"/><stop offset="0.6145" stop-color="#3dffca"/><stop offset="0.6201" stop-color="#3dffd4"/><stop offset="0.6257" stop-color="#41ffde"/><stop offset="0.6313" stop-color="#43ffe7"/><stop offset="0.6425" stop-color="#42fffa"/><stop offset="0.6648" stop-color="#41ffff"/><stop offset="0.6760" stop-color="#3effff"/><stop offset="0.6816" stop-color="#3affff"/><stop offset="0.6872" stop-color="#34ffff"/><stop offset="0.6983" stop-color="#23ffff"/><stop offset="0.7039" stop-color="#1cffff"/><stop offset="0.7095" stop-color="#18ffff"/><stop offset="0.7151" stop-color="#32ff4c"/><stop offset="0.7207" stop-color="#28ff4c"/><stop offset="0.7263" stop-color="#23ff4c"/><stop offset="0.8156" stop-color="#1bff4c"/><stop offset="0.8212" stop-color="#1bff4c"/><stop offset="0.8268" stop-color="#26ff4c"/><stop offset="0.8436" stop-color="#27ff4c"/><stop offset="0.8492" stop-color="#21ff4c"/><stop offset="0.8547" stop-color="#18ff4c"/><stop offset="0.8715" stop-color="#17ff4c"/><stop offset="0.9050" stop-color="#10ff4c"/><stop offset="0.9330" stop-color="#00ff4c"/><stop offset="1.0000" stop-color="#00ff4c"/></linearGradient>
<linearGradient id="s25" x1="0" y1="0" x2="0" y2="1"><stop offset="0.0000" stop-color="#3aff00"/><stop offset="0.0447" stop-color="#38ff00"/><stop offset="0.1061" stop-color="#3aff00"/><stop offset="0.1285" stop-color="#3fff00"/><stop offset="0.1676" stop-color="#4bff02"/><stop offset="0.1955" stop-color="#4eff09"/><stop offset="0.2235" stop-color="#4cff11"/><stop offset="0.2514" stop-color="#49ff1a"/><stop offset="0.3184" stop-color="#3cff2b"/><stop offset="0.3520" stop-color="#33ff33"/><stop offset="0.3743" stop-color="#33ff38"/><stop offset="0.4078" stop-color="#38ff40"/><stop offset="0.4916" stop-color="#34fd5c"/><stop offset="0.4972" stop-color="#36f95d"/><stop offset="0.5028" stop-color="#3bf05a"/><stop offset="0.5084" stop-color="#42e154"/><stop offset="0.5251" stop-color="#61aa38"/><stop offset="0.5307" stop-color="#67a032"/><stop offset="0.5363" stop-color="#6a9a30"/><stop offset="0.5475" stop-color="#6a9931"/><stop offset="0.5531" stop-color="#699b34"/><stop offset="0.5642" stop-color="#62ac44"/><stop offset="0.5866" stop-color="#4af18e"/><stop offset="0.5922" stop-color="#45f99f"/><stop offset="0.6034" stop-color="#40ffb7"/><stop offset="0.6201" stop-color="#3bffd4"/><stop offset="0.6313" stop-color="#41ffe7"/><stop offset="0.6369" stop-color="#42fff1"/><stop offset="0.6480" stop-color="#41ffff"/><stop offset="0.6648" stop-color="#41ffff"/><stop offset="0.6760" stop-color="#3fffff"/><stop offset="0.6816" stop-color="#3bffff"/><stop offset="0.6872" stop-color="#36ffff"/><stop offset="0.7039" stop-color="#1effff"/><stop offset="0.7095" stop-color="#19ffff"/><stop offset="0.7151" stop-color="#32ff4c"/><stop offset="0.7207" stop-color="#28ff4c"/><stop offset="0.7263" stop-color="#23ff4c"/><stop offset="0.8156" stop-color="#1bff4c"/><stop offset="0.8212" stop-color="#1bff4c"/><stop offset="0.8268" stop-color="#26ff4c"/><stop offset="0.8436" stop-color="#27ff4c"/><stop offset="0.8492" stop-color="#21ff4c"/><stop offset="0.8547" stop-color="#18ff4c"/><stop offset="0.8715" stop-color="#17ff4c"/><stop offset="0.9050" stop-color="#10ff4c"/><stop offset="0.9330" stop-color="#00ff4c"/><stop offset="1.0000" stop-color="#00ff4c"/></linearGradient>
<linearGradient id="l4" x1="0" y1="0" x2="0" y2="1"><stop offset="0.0000" stop-color="#3aff00"/><stop offset="0.0447" stop-color="#38ff00"/><stop offset="0.1844" stop-color="#38ff06"/><stop offset="0.2402" stop-color="#3eff17"/><stop offset="0.2682" stop-color="#3fff1d"/><stop offset="0.2793" stop-color="#45ff21"/><stop offset="0.2961" stop-color="#58ff26"/><stop offset="0.3017" stop-color="#5cff27"/><stop offset="0.3128" stop-color="#5fff2a"/><stop offset="0.3240" stop-color="#5dff2c"/><stop offset="0.3296" stop-color="#5bff2e"/><stop offset="0.3352" stop-color="#56ff2f"/><stop offset="0.3520" stop-color="#41ff33"/><stop offset="0.3631" stop-color="#3bff36"/><stop offset="0.4749" stop-color="#35fe54"/><stop offset="0.4804" stop-color="#36fc55"/><stop offset="0.4860" stop-color="#3af454"/><stop offset="0.4916" stop-color="#44e44e"/><stop offset="0.5028" stop-color="#5fb739"/><stop offset="0.5084" stop-color="#6aa530"/><stop offset="0.5140" stop-color="#6f9c2c"/><stop offset="0.5251" stop-color="#70992d"/><stop offset="0.5307" stop-color="#6e9c30"/><stop offset="0.5363" stop-color="#68a537"/><stop offset="0.5419" stop-color="#5db745"/><stop offset="0.5475" stop-color="#4dce58"/><stop offset="0.5531" stop-color="#41e46b"/><stop offset="0.5587" stop-color="#3cf479"/><stop offset="0.5642" stop-color="#3afc82"/><stop offset="0.5810" stop-color="#36ff91"/><stop offset="0.6201" stop-color="#2affd4"/><stop offset="0.6257" stop-color="#31ffde"/><stop offset="0.6369" stop-color="#46fff1"/><stop offset="0.6425" stop-color="#4bfffa"/><stop offset="0.6536" stop-color="#4fffff"/><stop offset="0.6704" stop-color="#4fffff"/><stop offset="0.6760" stop-color="#4effff"/><stop offset="0.6816" stop-color="#4bffff"/><stop offset="0.6872" stop-color="#43ffff"/><stop offset="0.7039" stop-color="#20ffff"/><stop offset="0.7095" stop-color="#19ffff"/><stop offset="0.7151" stop-color="#16ffff"/><stop offset="0.7207" stop-color="#2fff4c"/><stop offset="0.7263" stop-color="#25ff4c"/><stop offset="0.7318" stop-color="#23ff4c"/><stop offset="0.7654" stop-color="#20ff4c"/><stop offset="0.7877" stop-color="#1aff4c"/><stop offset="0.8380" stop-color="#15ff4c"/><stop offset="0.8715" stop-color="#0dff4c"/><stop offset="0.8994" stop-color="#00ff4c"/><stop offset="1.0000" stop-color="#00ff4c"/></linearGradient>
<linearGradient id="l5" x1="0" y1="0" x2="0" y2="1"><stop offset="0.0000" stop-color="#3aff00"/><stop offset="0.0447" stop-color="#38ff00"/><stop offset="0.1844" stop-color="#38ff06"/><stop offset="0.2402" stop-color="#3eff17"/><stop offset="0.2682" stop-color="#3fff1d"/><stop offset="0.2793" stop-color="#42ff21"/><stop offset="0.2849" stop-color="#47ff23"/><stop offset="0.3017" stop-color="#59ff27"/><stop offset="0.3073" stop-color="#5cff28"/><stop offset="0.3184" stop-color="#5dff2b"/><stop offset="0.3296" stop-color="#5bff2e"/><stop offset="0.3352" stop-color="#57ff2f"/><stop offset="0.3520" stop-color="#44ff33"/><stop offset="0.3575" stop-color="#3fff34"/><stop offset="0.3631" stop-color="#3cff36"/><stop offset="0.3743" stop-color="#3aff38"/><stop offset="0.4637" stop-color="#36fe4e"/><stop offset="0.4693" stop-color="#37fc50"/><stop offset="0.4749" stop-color="#39f750"/><stop offset="0.4804" stop-color="#40eb4d"/><stop offset="0.4860" stop-color="#4ad946"/><stop offset="0.4972" stop-color="#63b034"/><stop offset="0.5028" stop-color="#6ca22d"/><stop offset="0.5084" stop-color="#709b2a"/><stop offset="0.5196" stop-color="#71992b"/><stop offset="0.5251" stop-color="#6f9b2e"/><stop offset="0.5307" stop-color="#6aa234"/><stop offset="0.5363" stop-color="#61b03f"/><stop offset="0.5475" stop-color="#46d960"/><stop offset="0.5531" stop-color="#3feb70"/><stop offset="0.5642" stop-color="#39fc83"/><stop offset="0.5810" stop-color="#36ff91"/><stop offset="0.6145" stop-color="#2cffca"/><stop offset="0.6201" stop-color="#34ffd4"/><stop offset="0.6313" stop-color="#48ffe7"/><stop offset="0.6369" stop-color="#4efff1"/><stop offset="0.6480" stop-color="#51ffff"/><stop offset="0.6704" stop-color="#51ffff"/><stop offset="0.6760" stop-color="#50ffff"/><stop offset="0.6816" stop-color="#4cffff"/><stop offset="0.6872" stop-color="#44ffff"/><stop offset="0.7039" stop-color="#21ffff"/><stop offset="0.7095" stop-color="#1affff"/><stop offset="0.7151" stop-color="#17ffff"/><stop offset="0.7207" stop-color="#2fff4c"/><stop offset="0.7263" stop-color="#25ff4c"/><stop offset="0.7318" stop-color="#23ff4c"/><stop offset="0.7598" stop-color="#21ff4c"/><stop offset="0.7877" stop-color="#1aff4c"/><stop offset="0.8156" stop-color="#17ff4c"/><stop offset="0.8212" stop-color="#21ff4c"/><stop offset="0.8268" stop-color="#27ff4c"/><stop offset="0.8324" stop-color="#21ff4c"/><stop offset="0.8380" stop-color="#15ff4c"/><stop offset="0.8715" stop-color="#0dff4c"/><stop offset="0.8994" stop-color="#00ff4c"/><stop offset="1.0000" stop-color="#00ff4c"/></linearGradient>
<filter id="cm" x="0" y="0" width="100%" height="100%" color-interpolation-filters="sRGB"><feTurbulence type="fractalNoise" baseFrequency="0.63 0.6" numOctaves="1" seed="7" result="n1"/><feColorMatrix in="n1" type="matrix" values="1 0 0 0 0 1 0 0 0 0 1 0 0 0 0 0 0 0 0 1" result="g1"/><feComponentTransfer in="g1" result="q1"><feFuncR type="table" tableValues="0.0000 0.0000 0.0000 0.0000 0.0000 0.0000 0.0000 0.0000 0.0000 0.0000 0.0000 0.0000 0.0000 0.0000 0.0000 0.0316 0.0748 0.1166 0.1570 0.1960 0.2337 0.2702 0.3054 0.3394 0.3724 0.4042 0.4351 0.4649 0.4938 0.5218 0.5489 0.5752 0.6007 0.6255 0.6495 0.6729 0.6955 0.7176 0.7390 0.7598 0.7801 0.7998 0.8191 0.8378 0.8561 0.8739 0.8913 0.9083 0.9248 0.9410 0.9568 0.9723 0.9874 1.0000 1.0000 1.0000 1.0000 1.0000 1.0000 1.0000 1.0000 1.0000 1.0000 1.0000"/><feFuncG type="table" tableValues="0.0000 0.0000 0.0000 0.0000 0.0000 0.0000 0.0000 0.0000 0.0000 0.0000 0.0000 0.0000 0.0000 0.0000 0.0000 0.0316 0.0748 0.1166 0.1570 0.1960 0.2337 0.2702 0.3054 0.3394 0.3724 0.4042 0.4351 0.4649 0.4938 0.5218 0.5489 0.5752 0.6007 0.6255 0.6495 0.6729 0.6955 0.7176 0.7390 0.7598 0.7801 0.7998 0.8191 0.8378 0.8561 0.8739 0.8913 0.9083 0.9248 0.9410 0.9568 0.9723 0.9874 1.0000 1.0000 1.0000 1.0000 1.0000 1.0000 1.0000 1.0000 1.0000 1.0000 1.0000"/><feFuncB type="table" tableValues="0.0000 0.0000 0.0000 0.0000 0.0000 0.0000 0.0000 0.0000 0.0000 0.0000 0.0000 0.0000 0.0000 0.0000 0.0000 0.0316 0.0748 0.1166 0.1570 0.1960 0.2337 0.2702 0.3054 0.3394 0.3724 0.4042 0.4351 0.4649 0.4938 0.5218 0.5489 0.5752 0.6007 0.6255 0.6495 0.6729 0.6955 0.7176 0.7390 0.7598 0.7801 0.7998 0.8191 0.8378 0.8561 0.8739 0.8913 0.9083 0.9248 0.9410 0.9568 0.9723 0.9874 1.0000 1.0000 1.0000 1.0000 1.0000 1.0000 1.0000 1.0000 1.0000 1.0000 1.0000"/></feComponentTransfer><feTurbulence type="fractalNoise" baseFrequency="0.55 0.012" numOctaves="1" seed="3" result="n2"/><feColorMatrix in="n2" type="matrix" values="0 1 0 0 0 0 1 0 0 0 0 1 0 0 0 0 0 0 0 1" result="g2"/><feColorMatrix in="SourceGraphic" type="matrix" values="1 0 0 0 0 1 0 0 0 0 1 0 0 0 0 0 0 0 0 1" result="V"/><feColorMatrix in="SourceGraphic" type="matrix" values="0 1 0 0 0 0 1 0 0 0 0 1 0 0 0 0 0 0 0 1" result="M"/><feColorMatrix in="SourceGraphic" type="matrix" values="0 0 1 0 0 0 0 1 0 0 0 0 1 0 0 0 0 0 0 1" result="K"/><feComposite in="M" in2="q1" operator="arithmetic" k1="1" k2="0" k3="0" k4="0" result="P1"/><feComposite in="K" in2="g2" operator="arithmetic" k1="1" k2="0" k3="0" k4="0" result="P2"/><feComposite in="V" in2="P1" operator="arithmetic" k1="0" k2="1" k3="0.2703" k4="0" result="F1"/><feComposite in="F1" in2="P2" operator="arithmetic" k1="0" k2="1" k3="0.3600" k4="0" result="F2"/><feComponentTransfer in="F2"><feFuncR type="table" tableValues="0.125 0.124 0.123 0.122 0.121 0.119 0.118 0.117 0.116 0.114 0.113 0.112 0.111 0.109 0.107 0.105 0.103 0.101 0.099 0.097 0.094 0.094 0.094 0.094 0.094 0.094 0.096 0.100 0.103 0.106 0.109 0.113 0.116 0.119 0.122 0.126 0.136 0.146 0.156 0.174 0.193 0.212 0.227 0.227 0.227 0.223 0.220 0.228 0.241 0.286 0.330 0.375 0.418 0.461 0.504 0.530 0.556 0.583 0.609 0.632 0.648 0.664 0.680 0.696 0.712 0.733 0.761 0.789 0.817 0.845 0.863 0.880 0.896 0.913 0.930 0.951 0.983 0.987 0.985 0.982 0.980 0.978 0.976 0.974 0.972 0.970 0.967 0.964 0.962 0.959 0.956 0.954 0.951 0.948 0.946 0.943 0.940 0.935 0.930 0.925 0.920 0.915 0.909 0.902 0.895 0.892 0.895 0.899 0.903 0.907 0.909 0.904 0.900 0.895 0.890 0.885 0.881 0.877 0.874 0.872 0.869 0.867 0.864 0.861 0.859 0.856 0.854 0.851"/><feFuncG type="table" tableValues="0.235 0.240 0.245 0.250 0.255 0.260 0.265 0.270 0.275 0.280 0.285 0.289 0.294 0.302 0.317 0.331 0.346 0.361 0.376 0.391 0.406 0.449 0.497 0.546 0.594 0.642 0.659 0.659 0.659 0.659 0.659 0.659 0.659 0.659 0.659 0.659 0.648 0.638 0.628 0.612 0.595 0.578 0.565 0.565 0.569 0.597 0.625 0.635 0.646 0.668 0.691 0.714 0.738 0.762 0.785 0.791 0.798 0.805 0.811 0.817 0.821 0.825 0.829 0.833 0.837 0.843 0.851 0.860 0.869 0.878 0.884 0.889 0.895 0.900 0.906 0.877 0.771 0.737 0.718 0.698 0.679 0.660 0.640 0.621 0.602 0.586 0.570 0.554 0.538 0.523 0.507 0.491 0.475 0.459 0.443 0.427 0.412 0.400 0.387 0.375 0.362 0.350 0.330 0.306 0.282 0.256 0.229 0.202 0.175 0.148 0.125 0.120 0.115 0.110 0.106 0.101 0.096 0.093 0.090 0.087 0.084 0.081 0.078 0.075 0.072 0.069 0.066 0.063"/><feFuncB type="table" tableValues="0.471 0.477 0.483 0.489 0.495 0.501 0.508 0.514 0.520 0.526 0.532 0.538 0.544 0.552 0.562 0.573 0.583 0.594 0.605 0.615 0.626 0.643 0.661 0.679 0.697 0.715 0.709 0.689 0.670 0.650 0.631 0.611 0.591 0.572 0.552 0.533 0.513 0.492 0.472 0.447 0.422 0.397 0.371 0.344 0.317 0.286 0.254 0.235 0.220 0.220 0.220 0.217 0.207 0.197 0.188 0.188 0.188 0.188 0.188 0.187 0.183 0.179 0.175 0.171 0.167 0.162 0.155 0.148 0.141 0.134 0.127 0.120 0.113 0.106 0.099 0.091 0.080 0.080 0.082 0.084 0.086 0.088 0.090 0.092 0.094 0.096 0.098 0.100 0.102 0.104 0.106 0.108 0.110 0.112 0.114 0.116 0.120 0.126 0.133 0.140 0.147 0.154 0.168 0.184 0.201 0.210 0.206 0.201 0.196 0.192 0.191 0.206 0.222 0.237 0.252 0.268 0.283 0.293 0.299 0.305 0.311 0.317 0.323 0.329 0.335 0.341 0.347 0.353"/><feFuncA type="linear" slope="0" intercept="1"/></feComponentTransfer></filter>
<linearGradient id="cb" x1="0" y1="0" x2="0" y2="1"><stop offset="0.0000" stop-color="#d9105a"/><stop offset="0.0828" stop-color="#e0184a"/><stop offset="0.1354" stop-color="#e82030"/><stop offset="0.1762" stop-color="#e34436"/><stop offset="0.2019" stop-color="#e95828"/><stop offset="0.2462" stop-color="#f06a1e"/><stop offset="0.3396" stop-color="#f89a18"/><stop offset="0.4002" stop-color="#fcc014"/><stop offset="0.4119" stop-color="#f0e818"/><stop offset="0.4562" stop-color="#d8e022"/><stop offset="0.4912" stop-color="#b8d62a"/><stop offset="0.5379" stop-color="#a0d030"/><stop offset="0.5753" stop-color="#80c830"/><stop offset="0.6009" stop-color="#5cb438"/><stop offset="0.6231" stop-color="#3ca438"/><stop offset="0.6371" stop-color="#38a040"/><stop offset="0.6546" stop-color="#3a9052"/><stop offset="0.6709" stop-color="#3a9060"/><stop offset="0.7001" stop-color="#28a078"/><stop offset="0.7246" stop-color="#20a888"/><stop offset="0.8005" stop-color="#18a8b8"/><stop offset="0.8413" stop-color="#1868a0"/><stop offset="0.8996" stop-color="#1c4c8c"/><stop offset="1.0000" stop-color="#203c78"/></linearGradient>
</defs>
<rect width="1920" height="980" fill="#000"/>
<g transform="translate(52 70)"><g filter="url(#cm)">
<rect x="0" y="0" width="1752" height="861" fill="url(#gb)"/>
<rect x="0.0" y="682" width="94.0" height="179" fill="url(#l1)"/>
<rect x="94.0" y="682" width="72.0" height="179" fill="url(#l2)"/>
<rect x="166.0" y="682" width="24.5" height="179" fill="url(#s0)"/>
<rect x="190.0" y="682" width="24.5" height="179" fill="url(#s1)"/>
<rect x="214.0" y="682" width="24.5" height="179" fill="url(#s2)"/>
<rect x="238.0" y="682" width="24.5" height="179" fill="url(#s3)"/>
<rect x="262.0" y="682" width="24.5" height="179" fill="url(#s4)"/>
<rect x="286.0" y="682" width="24.5" height="179" fill="url(#s5)"/>
<rect x="310.0" y="682" width="24.5" height="179" fill="url(#s6)"/>
<rect x="334.0" y="682" width="24.5" height="179" fill="url(#s7)"/>
<rect x="358.0" y="682" width="24.5" height="179" fill="url(#s8)"/>
<rect x="382.0" y="682" width="24.5" height="179" fill="url(#s9)"/>
<rect x="406.0" y="682" width="24.5" height="179" fill="url(#s10)"/>
<rect x="430.0" y="682" width="24.5" height="179" fill="url(#s11)"/>
<rect x="454.0" y="682" width="24.5" height="179" fill="url(#s12)"/>
<rect x="478.0" y="682" width="24.5" height="179" fill="url(#s13)"/>
<rect x="502.0" y="682" width="24.5" height="179" fill="url(#s14)"/>
<rect x="526.0" y="682" width="24.5" height="179" fill="url(#s15)"/>
<rect x="550.0" y="682" width="24.5" height="179" fill="url(#s16)"/>
<rect x="574.0" y="682" width="24.5" height="179" fill="url(#s17)"/>
<rect x="598.0" y="682" width="24.5" height="179" fill="url(#s18)"/>
<rect x="622.0" y="682" width="24.5" height="179" fill="url(#s19)"/>
<rect x="646.0" y="682" width="24.5" height="179" fill="url(#s20)"/>
<rect x="670.0" y="682" width="24.5" height="179" fill="url(#s21)"/>
<rect x="694.0" y="682" width="24.5" height="179" fill="url(#s22)"/>
<rect x="718.0" y="682" width="24.5" height="179" fill="url(#s23)"/>
<rect x="742.0" y="682" width="24.5" height="179" fill="url(#s24)"/>
<rect x="766.0" y="682" width="15.5" height="179" fill="url(#s25)"/>
<rect x="1163.0" y="682" width="120.0" height="179" fill="url(#l4)"/>
<rect x="1386.0" y="682" width="366.0" height="179" fill="url(#l5)"/>
<rect x="31.0" y="577.2" width="685.0" height="2.4" fill="#875900"/>
<rect x="1475.0" y="577.2" width="277.0" height="2.4" fill="#875900"/>
<rect x="753.0" y="582.0" width="28.0" height="2.0" fill="#815900"/>
<rect x="1167.0" y="581.5" width="110.0" height="2.2" fill="#865900"/>
<rect x="1391.0" y="581.5" width="62.0" height="2.0" fill="#7c5900"/>
</g></g>
<rect x="140" y="70" width="13" height="861" fill="#fff"/><rect x="214" y="70" width="8" height="861" fill="#fff"/><rect x="833" y="70" width="386" height="861" fill="#fff"/><rect x="1329" y="70" width="114" height="861" fill="#fff"/>
<g style="opacity:.999">
<path d="M52 63v5M62 65v3M73 65v3M83 65v3M94 65v3M104 63v5M115 65v3M125 65v3M135 65v3M146 65v3M156 63v5M167 65v3M177 65v3M188 65v3M198 65v3M208 63v5M219 65v3M229 65v3M240 65v3M250 65v3M261 63v5M271 65v3M281 65v3M292 65v3M302 65v3M313 63v5M323 65v3M334 65v3M344 65v3M354 65v3M365 63v5M375 65v3M386 65v3M396 65v3M407 65v3M417 63v5M427 65v3M438 65v3M448 65v3M459 65v3M469 63v5M480 65v3M490 65v3M500 65v3M511 65v3M521 63v5M532 65v3M542 65v3M553 65v3M563 65v3M573 63v5M584 65v3M594 65v3M605 65v3M615 65v3M626 63v5M636 65v3M646 65v3M657 65v3M667 65v3M678 63v5M688 65v3M699 65v3M709 65v3M719 65v3M730 63v5M740 65v3M751 65v3M761 65v3M772 65v3M782 63v5M792 65v3M803 65v3M813 65v3M824 65v3M834 63v5M845 65v3M855 65v3M865 65v3M876 65v3M886 63v5M897 65v3M907 65v3M918 65v3M928 65v3M938 63v5M949 65v3M959 65v3M970 65v3M980 65v3M991 63v5M1001 65v3M1011 65v3M1022 65v3M1032 65v3M1043 63v5M1053 65v3M1064 65v3M1074 65v3M1084 65v3M1095 63v5M1105 65v3M1116 65v3M1126 65v3M1137 65v3M1147 63v5M1157 65v3M1168 65v3M1178 65v3M1189 65v3M1199 63v5M1210 65v3M1220 65v3M1230 65v3M1241 65v3M1251 63v5M1262 65v3M1272 65v3M1283 65v3M1293 65v3M1303 63v5M1314 65v3M1324 65v3M1335 65v3M1345 65v3M1356 63v5M1366 65v3M1376 65v3M1387 65v3M1397 65v3M1408 63v5M1418 65v3M1429 65v3M1439 65v3M1449 65v3M1460 63v5M1470 65v3M1481 65v3M1491 65v3M1502 65v3M1512 63v5M1522 65v3M1533 65v3M1543 65v3M1554 65v3M1564 63v5M1575 65v3M1585 65v3M1595 65v3M1606 65v3M1616 63v5M1627 65v3M1637 65v3M1648 65v3M1658 65v3M1668 63v5M1679 65v3M1689 65v3M1700 65v3M1710 65v3M1721 63v5M1731 65v3M1741 65v3M1752 65v3M1762 65v3M1773 63v5M1783 65v3M1794 65v3M1803 63v5" stroke="#fff" stroke-width="1" transform="translate(.5 0)" shape-rendering="crispEdges"/>
<text x="52.5" y="61" text-anchor="middle" class="t" textLength="23.9" lengthAdjust="spacingAndGlyphs">4050</text>
<text x="104.643" y="61" text-anchor="middle" class="t" textLength="23.9" lengthAdjust="spacingAndGlyphs">4100</text>
<text x="156.786" y="61" text-anchor="middle" class="t" textLength="23.9" lengthAdjust="spacingAndGlyphs">4150</text>
<text x="208.929" y="61" text-anchor="middle" class="t" textLength="23.9" lengthAdjust="spacingAndGlyphs">4200</text>
<text x="261.071" y="61" text-anchor="middle" class="t" textLength="23.9" lengthAdjust="spacingAndGlyphs">4250</text>
<text x="313.214" y="61" text-anchor="middle" class="t" textLength="23.9" lengthAdjust="spacingAndGlyphs">4300</text>
<text x="365.357" y="61" text-anchor="middle" class="t" textLength="23.9" lengthAdjust="spacingAndGlyphs">4350</text>
<text x="417.5" y="61" text-anchor="middle" class="t" textLength="23.9" lengthAdjust="spacingAndGlyphs">4400</text>
<text x="469.643" y="61" text-anchor="middle" class="t" textLength="23.9" lengthAdjust="spacingAndGlyphs">4450</text>
<text x="521.786" y="61" text-anchor="middle" class="t" textLength="23.9" lengthAdjust="spacingAndGlyphs">4500</text>
<text x="573.929" y="61" text-anchor="middle" class="t" textLength="23.9" lengthAdjust="spacingAndGlyphs">4550</text>
<text x="626.071" y="61" text-anchor="middle" class="t" textLength="23.9" lengthAdjust="spacingAndGlyphs">4600</text>
<text x="678.214" y="61" text-anchor="middle" class="t" textLength="23.9" lengthAdjust="spacingAndGlyphs">4650</text>
<text x="730.357" y="61" text-anchor="middle" class="t" textLength="23.9" lengthAdjust="spacingAndGlyphs">4700</text>
<text x="782.5" y="61" text-anchor="middle" class="t" textLength="23.9" lengthAdjust="spacingAndGlyphs">4750</text>
<text x="834.643" y="61" text-anchor="middle" class="t" textLength="23.9" lengthAdjust="spacingAndGlyphs">4800</text>
<text x="886.786" y="61" text-anchor="middle" class="t" textLength="23.9" lengthAdjust="spacingAndGlyphs">4850</text>
<text x="938.929" y="61" text-anchor="middle" class="t" textLength="23.9" lengthAdjust="spacingAndGlyphs">4900</text>
<text x="991.071" y="61" text-anchor="middle" class="t" textLength="23.9" lengthAdjust="spacingAndGlyphs">4950</text>
<text x="1043.21" y="61" text-anchor="middle" class="t" textLength="23.9" lengthAdjust="spacingAndGlyphs">5000</text>
<text x="1095.36" y="61" text-anchor="middle" class="t" textLength="23.9" lengthAdjust="spacingAndGlyphs">5050</text>
<text x="1147.5" y="61" text-anchor="middle" class="t" textLength="23.9" lengthAdjust="spacingAndGlyphs">5100</text>
<text x="1199.64" y="61" text-anchor="middle" class="t" textLength="23.9" lengthAdjust="spacingAndGlyphs">5150</text>
<text x="1251.79" y="61" text-anchor="middle" class="t" textLength="23.9" lengthAdjust="spacingAndGlyphs">5200</text>
<text x="1303.93" y="61" text-anchor="middle" class="t" textLength="23.9" lengthAdjust="spacingAndGlyphs">5250</text>
<text x="1356.07" y="61" text-anchor="middle" class="t" textLength="23.9" lengthAdjust="spacingAndGlyphs">5300</text>
<text x="1408.21" y="61" text-anchor="middle" class="t" textLength="23.9" lengthAdjust="spacingAndGlyphs">5350</text>
<text x="1460.36" y="61" text-anchor="middle" class="t" textLength="23.9" lengthAdjust="spacingAndGlyphs">5400</text>
<text x="1512.5" y="61" text-anchor="middle" class="t" textLength="23.9" lengthAdjust="spacingAndGlyphs">5450</text>
<text x="1564.64" y="61" text-anchor="middle" class="t" textLength="23.9" lengthAdjust="spacingAndGlyphs">5500</text>
<text x="1616.79" y="61" text-anchor="middle" class="t" textLength="23.9" lengthAdjust="spacingAndGlyphs">5550</text>
<text x="1668.93" y="61" text-anchor="middle" class="t" textLength="23.9" lengthAdjust="spacingAndGlyphs">5600</text>
<text x="1721.07" y="61" text-anchor="middle" class="t" textLength="23.9" lengthAdjust="spacingAndGlyphs">5650</text>
<text x="1773.21" y="61" text-anchor="middle" class="t" textLength="23.9" lengthAdjust="spacingAndGlyphs">5700</text>
<text x="1803.5" y="61" text-anchor="middle" class="t" textLength="23.9" lengthAdjust="spacingAndGlyphs">5730</text>
<path d="M45 930h5M47 919h3M45 908h5M47 898h3M45 887h5M47 876h3M45 866h5M47 855h3M45 844h5M47 833h3M45 822h5M47 812h3M45 801h5M47 790h3M45 780h5M47 769h3M45 758h5M47 747h3M45 736h5M47 726h3M45 715h5M47 704h3M45 694h5M47 683h3M45 672h5M47 661h3M45 650h5M47 640h3M45 629h5M47 618h3M45 608h5M47 597h3M45 586h5M47 575h3M45 564h5M47 554h3M45 543h5M47 532h3M45 522h5M47 511h3M45 500h5M47 489h3M45 478h5M47 468h3M45 457h5M47 446h3M45 436h5M47 425h3M45 414h5M47 403h3M45 392h5M47 382h3M45 371h5M47 360h3M45 350h5M47 339h3M45 328h5M47 317h3M45 306h5M47 296h3M45 285h5M47 274h3M45 264h5M47 253h3M45 242h5M47 231h3M45 220h5M47 210h3M45 199h5M47 188h3M45 178h5M47 167h3M45 156h5M47 145h3M45 134h5M47 124h3M45 113h5M47 102h3M45 92h5M47 81h3M45 70h5M1806 930h5M1806 919h3M1806 908h5M1806 898h3M1806 887h5M1806 876h3M1806 866h5M1806 855h3M1806 844h5M1806 833h3M1806 822h5M1806 812h3M1806 801h5M1806 790h3M1806 780h5M1806 769h3M1806 758h5M1806 747h3M1806 736h5M1806 726h3M1806 715h5M1806 704h3M1806 694h5M1806 683h3M1806 672h5M1806 661h3M1806 650h5M1806 640h3M1806 629h5M1806 618h3M1806 608h5M1806 597h3M1806 586h5M1806 575h3M1806 564h5M1806 554h3M1806 543h5M1806 532h3M1806 522h5M1806 511h3M1806 500h5M1806 489h3M1806 478h5M1806 468h3M1806 457h5M1806 446h3M1806 436h5M1806 425h3M1806 414h5M1806 403h3M1806 392h5M1806 382h3M1806 371h5M1806 360h3M1806 350h5M1806 339h3M1806 328h5M1806 317h3M1806 306h5M1806 296h3M1806 285h5M1806 274h3M1806 264h5M1806 253h3M1806 242h5M1806 231h3M1806 220h5M1806 210h3M1806 199h5M1806 188h3M1806 178h5M1806 167h3M1806 156h5M1806 145h3M1806 134h5M1806 124h3M1806 113h5M1806 102h3M1806 92h5M1806 81h3M1806 70h5" stroke="#fff" stroke-width="1" transform="translate(0 .5)" shape-rendering="crispEdges"/>
<text x="43.5" y="934.4" text-anchor="end" class="t" textLength="6.0" lengthAdjust="spacingAndGlyphs">0</text>
<text x="43.5" y="912.9" text-anchor="end" class="t" textLength="6.0" lengthAdjust="spacingAndGlyphs">5</text>
<text x="43.5" y="891.4" text-anchor="end" class="t" textLength="11.9" lengthAdjust="spacingAndGlyphs">10</text>
<text x="43.5" y="869.9" text-anchor="end" class="t" textLength="11.9" lengthAdjust="spacingAndGlyphs">15</text>
<text x="43.5" y="848.4" text-anchor="end" class="t" textLength="11.9" lengthAdjust="spacingAndGlyphs">20</text>
<text x="43.5" y="826.9" text-anchor="end" class="t" textLength="11.9" lengthAdjust="spacingAndGlyphs">25</text>
<text x="43.5" y="805.4" text-anchor="end" class="t" textLength="11.9" lengthAdjust="spacingAndGlyphs">30</text>
<text x="43.5" y="783.9" text-anchor="end" class="t" textLength="11.9" lengthAdjust="spacingAndGlyphs">35</text>
<text x="43.5" y="762.4" text-anchor="end" class="t" textLength="11.9" lengthAdjust="spacingAndGlyphs">40</text>
<text x="43.5" y="740.9" text-anchor="end" class="t" textLength="11.9" lengthAdjust="spacingAndGlyphs">45</text>
<text x="43.5" y="719.4" text-anchor="end" class="t" textLength="11.9" lengthAdjust="spacingAndGlyphs">50</text>
<text x="43.5" y="697.9" text-anchor="end" class="t" textLength="11.9" lengthAdjust="spacingAndGlyphs">55</text>
<text x="43.5" y="676.4" text-anchor="end" class="t" textLength="11.9" lengthAdjust="spacingAndGlyphs">60</text>
<text x="43.5" y="654.9" text-anchor="end" class="t" textLength="11.9" lengthAdjust="spacingAndGlyphs">65</text>
<text x="43.5" y="633.4" text-anchor="end" class="t" textLength="11.9" lengthAdjust="spacingAndGlyphs">70</text>
<text x="43.5" y="611.9" text-anchor="end" class="t" textLength="11.9" lengthAdjust="spacingAndGlyphs">75</text>
<text x="43.5" y="590.4" text-anchor="end" class="t" textLength="11.9" lengthAdjust="spacingAndGlyphs">80</text>
<text x="43.5" y="568.9" text-anchor="end" class="t" textLength="11.9" lengthAdjust="spacingAndGlyphs">85</text>
<text x="43.5" y="547.4" text-anchor="end" class="t" textLength="11.9" lengthAdjust="spacingAndGlyphs">90</text>
<text x="43.5" y="525.9" text-anchor="end" class="t" textLength="11.9" lengthAdjust="spacingAndGlyphs">95</text>
<text x="43.5" y="504.4" text-anchor="end" class="t" textLength="17.9" lengthAdjust="spacingAndGlyphs">100</text>
<text x="43.5" y="482.9" text-anchor="end" class="t" textLength="17.9" lengthAdjust="spacingAndGlyphs">105</text>
<text x="43.5" y="461.4" text-anchor="end" class="t" textLength="17.1" lengthAdjust="spacingAndGlyphs">110</text>
<text x="43.5" y="439.9" text-anchor="end" class="t" textLength="17.1" lengthAdjust="spacingAndGlyphs">115</text>
<text x="43.5" y="418.4" text-anchor="end" class="t" textLength="17.9" lengthAdjust="spacingAndGlyphs">120</text>
<text x="43.5" y="396.9" text-anchor="end" class="t" textLength="17.9" lengthAdjust="spacingAndGlyphs">125</text>
<text x="43.5" y="375.4" text-anchor="end" class="t" textLength="17.9" lengthAdjust="spacingAndGlyphs">130</text>
<text x="43.5" y="353.9" text-anchor="end" class="t" textLength="17.9" lengthAdjust="spacingAndGlyphs">135</text>
<text x="43.5" y="332.4" text-anchor="end" class="t" textLength="17.9" lengthAdjust="spacingAndGlyphs">140</text>
<text x="43.5" y="310.9" text-anchor="end" class="t" textLength="17.9" lengthAdjust="spacingAndGlyphs">145</text>
<text x="43.5" y="289.4" text-anchor="end" class="t" textLength="17.9" lengthAdjust="spacingAndGlyphs">150</text>
<text x="43.5" y="267.9" text-anchor="end" class="t" textLength="17.9" lengthAdjust="spacingAndGlyphs">155</text>
<text x="43.5" y="246.4" text-anchor="end" class="t" textLength="17.9" lengthAdjust="spacingAndGlyphs">160</text>
<text x="43.5" y="224.9" text-anchor="end" class="t" textLength="17.9" lengthAdjust="spacingAndGlyphs">165</text>
<text x="43.5" y="203.4" text-anchor="end" class="t" textLength="17.9" lengthAdjust="spacingAndGlyphs">170</text>
<text x="43.5" y="181.9" text-anchor="end" class="t" textLength="17.9" lengthAdjust="spacingAndGlyphs">175</text>
<text x="43.5" y="160.4" text-anchor="end" class="t" textLength="17.9" lengthAdjust="spacingAndGlyphs">180</text>
<text x="43.5" y="138.9" text-anchor="end" class="t" textLength="17.9" lengthAdjust="spacingAndGlyphs">185</text>
<text x="43.5" y="117.4" text-anchor="end" class="t" textLength="17.9" lengthAdjust="spacingAndGlyphs">190</text>
<text x="43.5" y="95.9" text-anchor="end" class="t" textLength="17.9" lengthAdjust="spacingAndGlyphs">195</text>
<text x="43.5" y="74.4" text-anchor="end" class="t" textLength="17.9" lengthAdjust="spacingAndGlyphs">200</text>
<path d="M52 933v5M55 933v3M61 933v3M67 933v3M74 933v3M80 933v3M86 933v3M93 933v3M99 933v5M105 933v3M112 933v3M118 933v3M125 933v3M131 933v3M137 933v3M144 933v3M150 933v3M156 933v3M163 933v3M169 933v3M175 933v5M182 933v3M188 933v3M195 933v3M201 933v3M207 933v3M214 933v3M220 933v3M226 933v3M233 933v3M239 933v3M245 933v3M252 933v5M258 933v3M265 933v3M271 933v3M277 933v3M284 933v3M290 933v3M296 933v3M303 933v3M309 933v3M315 933v3M322 933v3M328 933v5M334 933v3M341 933v3M347 933v3M354 933v3M360 933v3M366 933v3M373 933v3M379 933v3M385 933v3M392 933v3M398 933v3M404 933v5M411 933v3M417 933v3M424 933v3M430 933v3M436 933v3M443 933v3M449 933v3M455 933v3M462 933v3M468 933v3M474 933v3M481 933v5M487 933v3M494 933v3M500 933v3M506 933v3M513 933v3M519 933v3M525 933v3M532 933v3M538 933v3M544 933v3M551 933v3M557 933v5M564 933v3M570 933v3M576 933v3M583 933v3M589 933v3M595 933v3M602 933v3M608 933v3M614 933v3M621 933v3M627 933v3M633 933v5M640 933v3M646 933v3M653 933v3M659 933v3M665 933v3M672 933v3M678 933v3M684 933v3M691 933v3M697 933v3M703 933v3M710 933v5M716 933v3M723 933v3M729 933v3M735 933v3M742 933v3M748 933v3M754 933v3M761 933v3M767 933v3M773 933v3M780 933v3M786 933v5M793 933v3M799 933v3M805 933v3M812 933v3M818 933v3M824 933v3M831 933v3M837 933v3M843 933v3M850 933v3M856 933v3M862 933v5M869 933v3M875 933v3M882 933v3M888 933v3M894 933v3M901 933v3M907 933v3M913 933v3M920 933v3M926 933v3M932 933v3M939 933v5M945 933v3M952 933v3M958 933v3M964 933v3M971 933v3M977 933v3M983 933v3M990 933v3M996 933v3M1002 933v3M1009 933v3M1015 933v5M1022 933v3M1028 933v3M1034 933v3M1041 933v3M1047 933v3M1053 933v3M1060 933v3M1066 933v3M1072 933v3M1079 933v3M1085 933v3M1092 933v5M1098 933v3M1104 933v3M1111 933v3M1117 933v3M1123 933v3M1130 933v3M1136 933v3M1142 933v3M1149 933v3M1155 933v3M1161 933v3M1168 933v5M1174 933v3M1181 933v3M1187 933v3M1193 933v3M1200 933v3M1206 933v3M1212 933v3M1219 933v3M1225 933v3M1231 933v3M1238 933v3M1244 933v5M1251 933v3M1257 933v3M1263 933v3M1270 933v3M1276 933v3M1282 933v3M1289 933v3M1295 933v3M1301 933v3M1308 933v3M1314 933v3M1321 933v5M1327 933v3M1333 933v3M1340 933v3M1346 933v3M1352 933v3M1359 933v3M1365 933v3M1371 933v3M1378 933v3M1384 933v3M1390 933v3M1397 933v5M1403 933v3M1410 933v3M1416 933v3M1422 933v3M1429 933v3M1435 933v3M1441 933v3M1448 933v3M1454 933v3M1460 933v3M1467 933v3M1473 933v5M1480 933v3M1486 933v3M1492 933v3M1499 933v3M1505 933v3M1511 933v3M1518 933v3M1524 933v3M1530 933v3M1537 933v3M1543 933v3M1550 933v5M1556 933v3M1562 933v3M1569 933v3M1575 933v3M1581 933v3M1588 933v3M1594 933v3M1600 933v3M1607 933v3M1613 933v3M1620 933v3M1626 933v5M1632 933v3M1639 933v3M1645 933v3M1651 933v3M1658 933v3M1664 933v3M1670 933v3M1677 933v3M1683 933v3M1689 933v3M1696 933v3M1702 933v5M1709 933v3M1715 933v3M1721 933v3M1728 933v3M1734 933v3M1740 933v3M1747 933v3M1753 933v3M1759 933v3M1766 933v3M1772 933v3M1779 933v5M1785 933v3M1791 933v3M1798 933v3M1803 933v5" stroke="#fff" stroke-width="1" transform="translate(.5 0)" shape-rendering="crispEdges"/>
<text x="52" y="947.5" text-anchor="middle" class="t" textLength="62.6" lengthAdjust="spacingAndGlyphs">01:06:54.845</text>
<text x="52" y="959.5" text-anchor="middle" class="t" textLength="53.7" lengthAdjust="spacingAndGlyphs">02/26/2026</text>
<text x="174.752" y="947.5" text-anchor="middle" class="t" textLength="62.6" lengthAdjust="spacingAndGlyphs">01:15:00.000</text>
<text x="174.752" y="959.5" text-anchor="middle" class="t" textLength="53.7" lengthAdjust="spacingAndGlyphs">02/26/2026</text>
<text x="251.089" y="947.5" text-anchor="middle" class="t" textLength="62.6" lengthAdjust="spacingAndGlyphs">01:20:00.000</text>
<text x="251.089" y="959.5" text-anchor="middle" class="t" textLength="53.7" lengthAdjust="spacingAndGlyphs">02/26/2026</text>
<text x="327.427" y="947.5" text-anchor="middle" class="t" textLength="62.6" lengthAdjust="spacingAndGlyphs">01:25:00.000</text>
<text x="327.427" y="959.5" text-anchor="middle" class="t" textLength="53.7" lengthAdjust="spacingAndGlyphs">02/26/2026</text>
<text x="403.764" y="947.5" text-anchor="middle" class="t" textLength="62.6" lengthAdjust="spacingAndGlyphs">01:30:00.000</text>
<text x="403.764" y="959.5" text-anchor="middle" class="t" textLength="53.7" lengthAdjust="spacingAndGlyphs">02/26/2026</text>
<text x="480.102" y="947.5" text-anchor="middle" class="t" textLength="62.6" lengthAdjust="spacingAndGlyphs">01:35:00.000</text>
<text x="480.102" y="959.5" text-anchor="middle" class="t" textLength="53.7" lengthAdjust="spacingAndGlyphs">02/26/2026</text>
<text x="556.439" y="947.5" text-anchor="middle" class="t" textLength="62.6" lengthAdjust="spacingAndGlyphs">01:40:00.000</text>
<text x="556.439" y="959.5" text-anchor="middle" class="t" textLength="53.7" lengthAdjust="spacingAndGlyphs">02/26/2026</text>
<text x="632.777" y="947.5" text-anchor="middle" class="t" textLength="62.6" lengthAdjust="spacingAndGlyphs">01:45:00.000</text>
<text x="632.777" y="959.5" text-anchor="middle" class="t" textLength="53.7" lengthAdjust="spacingAndGlyphs">02/26/2026</text>
<text x="709.114" y="947.5" text-anchor="middle" class="t" textLength="62.6" lengthAdjust="spacingAndGlyphs">01:50:00.000</text>
<text x="709.114" y="959.5" text-anchor="middle" class="t" textLength="53.7" lengthAdjust="spacingAndGlyphs">02/26/2026</text>
<text x="785.452" y="947.5" text-anchor="middle" class="t" textLength="62.6" lengthAdjust="spacingAndGlyphs">01:55:00.000</text>
<text x="785.452" y="959.5" text-anchor="middle" class="t" textLength="53.7" lengthAdjust="spacingAndGlyphs">02/26/2026</text>
<text x="861.79" y="947.5" text-anchor="middle" class="t" textLength="62.6" lengthAdjust="spacingAndGlyphs">02:00:00.000</text>
<text x="861.79" y="959.5" text-anchor="middle" class="t" textLength="53.7" lengthAdjust="spacingAndGlyphs">02/26/2026</text>
<text x="938.127" y="947.5" text-anchor="middle" class="t" textLength="62.6" lengthAdjust="spacingAndGlyphs">02:05:00.000</text>
<text x="938.127" y="959.5" text-anchor="middle" class="t" textLength="53.7" lengthAdjust="spacingAndGlyphs">02/26/2026</text>
<text x="1014.46" y="947.5" text-anchor="middle" class="t" textLength="62.6" lengthAdjust="spacingAndGlyphs">02:10:00.000</text>
<text x="1014.46" y="959.5" text-anchor="middle" class="t" textLength="53.7" lengthAdjust="spacingAndGlyphs">02/26/2026</text>
<text x="1090.8" y="947.5" text-anchor="middle" class="t" textLength="62.6" lengthAdjust="spacingAndGlyphs">02:15:00.000</text>
<text x="1090.8" y="959.5" text-anchor="middle" class="t" textLength="53.7" lengthAdjust="spacingAndGlyphs">02/26/2026</text>
<text x="1167.14" y="947.5" text-anchor="middle" class="t" textLength="62.6" lengthAdjust="spacingAndGlyphs">02:20:00.000</text>
<text x="1167.14" y="959.5" text-anchor="middle" class="t" textLength="53.7" lengthAdjust="spacingAndGlyphs">02/26/2026</text>
<text x="1243.48" y="947.5" text-anchor="middle" class="t" textLength="62.6" lengthAdjust="spacingAndGlyphs">02:25:00.000</text>
<text x="1243.48" y="959.5" text-anchor="middle" class="t" textLength="53.7" lengthAdjust="spacingAndGlyphs">02/26/2026</text>
<text x="1319.81" y="947.5" text-anchor="middle" class="t" textLength="62.6" lengthAdjust="spacingAndGlyphs">02:30:00.000</text>
<text x="1319.81" y="959.5" text-anchor="middle" class="t" textLength="53.7" lengthAdjust="spacingAndGlyphs">02/26/2026</text>
<text x="1396.15" y="947.5" text-anchor="middle" class="t" textLength="62.6" lengthAdjust="spacingAndGlyphs">02:35:00.000</text>
<text x="1396.15" y="959.5" text-anchor="middle" class="t" textLength="53.7" lengthAdjust="spacingAndGlyphs">02/26/2026</text>
<text x="1472.49" y="947.5" text-anchor="middle" class="t" textLength="62.6" lengthAdjust="spacingAndGlyphs">02:40:00.000</text>
<text x="1472.49" y="959.5" text-anchor="middle" class="t" textLength="53.7" lengthAdjust="spacingAndGlyphs">02/26/2026</text>
<text x="1548.83" y="947.5" text-anchor="middle" class="t" textLength="62.6" lengthAdjust="spacingAndGlyphs">02:45:00.000</text>
<text x="1548.83" y="959.5" text-anchor="middle" class="t" textLength="53.7" lengthAdjust="spacingAndGlyphs">02/26/2026</text>
<text x="1625.16" y="947.5" text-anchor="middle" class="t" textLength="62.6" lengthAdjust="spacingAndGlyphs">02:50:00.000</text>
<text x="1625.16" y="959.5" text-anchor="middle" class="t" textLength="53.7" lengthAdjust="spacingAndGlyphs">02/26/2026</text>
<text x="1701.5" y="947.5" text-anchor="middle" class="t" textLength="62.6" lengthAdjust="spacingAndGlyphs">02:55:00.000</text>
<text x="1701.5" y="959.5" text-anchor="middle" class="t" textLength="53.7" lengthAdjust="spacingAndGlyphs">02/26/2026</text>
<text x="1802" y="947.5" text-anchor="middle" class="t" textLength="62.6" lengthAdjust="spacingAndGlyphs">03:01:36.126</text>
<text x="1802" y="959.5" text-anchor="middle" class="t" textLength="53.7" lengthAdjust="spacingAndGlyphs">02/26/2026</text>
<text x="925" y="974" text-anchor="middle" class="t" textLength="23.4" lengthAdjust="spacingAndGlyphs">Time</text>
<text x="808.4" y="15.7" class="h" textLength="23.3" lengthAdjust="spacingAndGlyphs">AOS</text>
<text x="838.2" y="15.7" class="h" textLength="126.7" lengthAdjust="spacingAndGlyphs">Thu 26 Feb 2026 03:01:22</text>
<text x="970.2" y="15.7" class="h" textLength="23.8" lengthAdjust="spacingAndGlyphs">AOS</text>
<text x="727.5" y="27.7" class="h" textLength="95.1" lengthAdjust="spacingAndGlyphs">CoordSystem:es18</text>
<text x="831.4" y="27.7" class="h" textLength="72.3" lengthAdjust="spacingAndGlyphs">SensorID:es18</text>
<text x="915.7" y="27.7" class="h" textLength="48" lengthAdjust="spacingAndGlyphs">Axis:sum</text>
<text x="975.7" y="27.7" class="h" textLength="98.3" lengthAdjust="spacingAndGlyphs">Windowing:Hanning</text>
<text x="618.4" y="39.7" class="h" textLength="78.3" lengthAdjust="spacingAndGlyphs">Cuttoff(Hz):200</text>
<text x="714.2" y="39.7" class="h" textLength="67" lengthAdjust="spacingAndGlyphs">df(Hz):0.2441</text>
<text x="799.4" y="39.7" class="h" textLength="80.2" lengthAdjust="spacingAndGlyphs">Sample/Sec:500</text>
<text x="900.2" y="39.7" class="h" textLength="72.7" lengthAdjust="spacingAndGlyphs">PSD size:2048</text>
<text x="993.6" y="39.7" class="h" textLength="64.3" lengthAdjust="spacingAndGlyphs">Overlap(%):0</text>
<text x="1081.9" y="39.7" class="h" textLength="101.8" lengthAdjust="spacingAndGlyphs">TimeRes.(sec):4.096</text>
<rect x="1841" y="74" width="18" height="3" fill="#e8487c"/>
<rect x="1841" y="79" width="18" height="857" fill="url(#cb)"/>
<rect x="1841" y="936.5" width="18" height="3.5" fill="#fff"/>
<text x="1869" y="83" text-anchor="start" class="t" textLength="24.4" lengthAdjust="spacingAndGlyphs">-5.00</text>
<text x="1869" y="511.4" text-anchor="start" class="t" textLength="24.4" lengthAdjust="spacingAndGlyphs">-9.00</text>
<text x="1869" y="939" text-anchor="start" class="t" textLength="30.4" lengthAdjust="spacingAndGlyphs">-13.00</text>
<text transform="translate(1910 507.5) rotate(90)" text-anchor="middle" class="t">Amplitude(Log10(g^2/Hz))</text>
<rect x="0" y="0" width="1834" height="1" fill="#a0a0a0"/>
<rect x="0" y="0" width="1" height="980" fill="#a0a0a0"/>
</g>
</svg>
</body></html>
